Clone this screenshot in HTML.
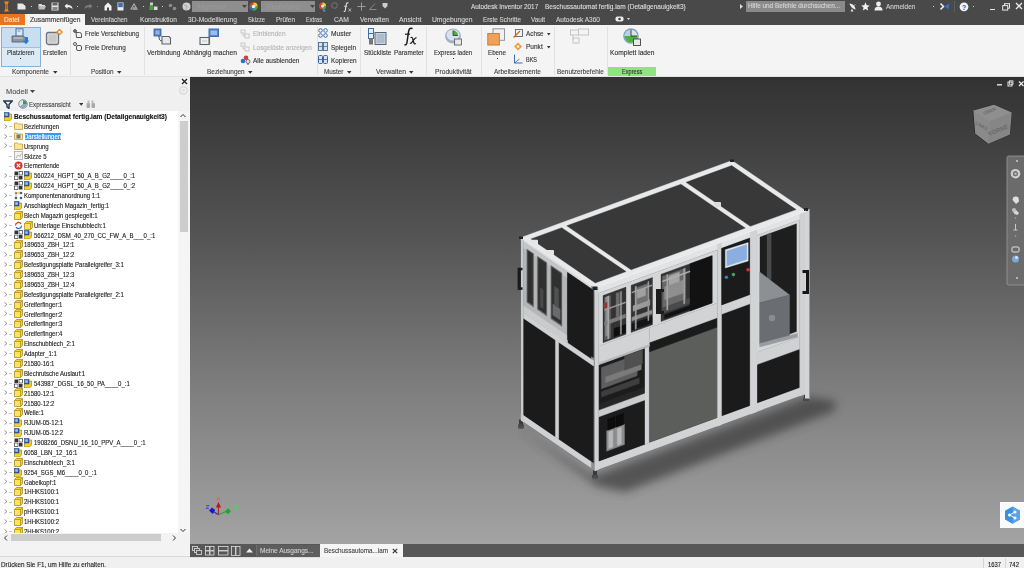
<!DOCTYPE html>
<html><head><meta charset="utf-8"><title>Autodesk Inventor</title>
<style>
*{margin:0;padding:0;box-sizing:border-box}
html,body{width:1024px;height:568px;overflow:hidden;background:#f0f0f0;font-family:"Liberation Sans",sans-serif}
.a{position:absolute;display:block}
.t{position:absolute;white-space:pre;line-height:1;transform-origin:0 0;-webkit-text-stroke:0.12px currentColor}
</style></head><body>
<div class="a" style="left:0px;top:0px;width:1024px;height:25px;background:#494949;"></div>
<svg class="a" style="left:3px;top:1px;" width="7" height="11" viewBox="0 0 7 11"><path d="M1 0.5h5l-1.2 2.2v5.6L6 10.5H1l1.2-2.2V2.7z" fill="#e8891e"/><path d="M2.6 3h1.8v5H2.6z" fill="#b45d10"/></svg>
<svg class="a" style="left:17px;top:3px;" width="10" height="7" viewBox="0 0 10 7"><path d="M0.5 0.5h5l3 2.5v3.5h-8z" fill="#e8e8e8"/></svg>
<div class="a" style="left:30.5px;top:6px;width:1.2px;height:1.2px;background:#cfcfcf;"></div>
<svg class="a" style="left:38px;top:3px;" width="8" height="7" viewBox="0 0 8 7"><path d="M0.5 1h3l1 1h2.5v1H2L0.5 6z" fill="#ddd"/><path d="M2 3h6L6.5 6.5H0.5z" fill="#bbb"/></svg>
<svg class="a" style="left:51px;top:2px;" width="8" height="9" viewBox="0 0 8 9"><rect x="0.5" y="0.5" width="7" height="8" fill="#e5e5e5"/><rect x="1.5" y="0.5" width="5" height="3" fill="#666"/><rect x="1.5" y="5" width="5" height="3" fill="#888"/></svg>
<svg class="a" style="left:64px;top:3px;" width="9" height="7" viewBox="0 0 9 7"><path d="M0.5 3L3.5 0.5v1.6c3 0 5 1.2 5 4.4-1-1.8-2.5-2.2-5-2.2V6z" fill="#eee"/></svg>
<div class="a" style="left:77px;top:6px;width:1.2px;height:1.2px;background:#cfcfcf;"></div>
<svg class="a" style="left:84px;top:3px;" width="9" height="7" viewBox="0 0 9 7"><path d="M8.5 3L5.5 0.5v1.6c-3 0-5 1.2-5 4.4 1-1.8 2.5-2.2 5-2.2V6z" fill="#7a7a7a"/></svg>
<div class="a" style="left:96.5px;top:6px;width:1.2px;height:1.2px;background:#9a9a9a;"></div>
<svg class="a" style="left:104px;top:2px;" width="8" height="9" viewBox="0 0 8 9"><path d="M4 0.5L0.5 4v4.5h2.5v-3h2v3h2.5V4z" fill="#f2f2f2"/></svg>
<svg class="a" style="left:117px;top:2px;" width="7" height="9" viewBox="0 0 7 9"><rect x="0.5" y="0.5" width="6" height="8" fill="#eee"/><rect x="1.2" y="1" width="4.6" height="4.2" fill="#3f6fb4"/></svg>
<svg class="a" style="left:130px;top:3px;" width="8" height="7" viewBox="0 0 8 7"><path d="M1 6L4 1l3 5z" fill="none" stroke="#aaa" stroke-width="1.2"/><rect x="3" y="4" width="4" height="3" fill="#999"/></svg>
<div class="a" style="left:142.5px;top:6px;width:1.2px;height:1.2px;background:#cfcfcf;"></div>
<svg class="a" style="left:149px;top:2px;" width="9" height="9" viewBox="0 0 9 9"><rect x="1" y="0.5" width="3" height="3" fill="#ccc"/><rect x="0.5" y="4" width="4" height="4" fill="#4aa13a"/><rect x="5" y="4.5" width="3.5" height="3.5" fill="#ddd"/></svg>
<div class="a" style="left:161.5px;top:6px;width:1.2px;height:1.2px;background:#cfcfcf;"></div>
<svg class="a" style="left:168px;top:3px;" width="9" height="8" viewBox="0 0 9 8"><circle cx="2.5" cy="2.5" r="1.8" fill="#8a8a8a"/><circle cx="6.5" cy="5.5" r="1.8" fill="#8a8a8a"/></svg>
<svg class="a" style="left:182px;top:2px;" width="9" height="9" viewBox="0 0 9 9"><circle cx="4.5" cy="4.5" r="4" fill="#cfcfcf"/><path d="M2 3c1 1 3 0 3 2s-2 1-1 3.5" stroke="#999" fill="none" stroke-width="0.8"/></svg>
<div class="a" style="left:192px;top:0.5px;width:55.5px;height:11.5px;background:#8e8e8e;"></div>
<div class="t" style="left:197px;top:3.08px;font-size:7px;color:#999;font-weight:400;transform:scaleX(0.9431);">Allgemein</div>
<svg class="a" style="left:242px;top:5px;" width="5" height="3" viewBox="0 0 5 3"><path d="M0 0h5L2.5 3z" fill="#444"/></svg>
<svg class="a" style="left:249px;top:2px;" width="9" height="9" viewBox="0 0 9 9"><circle cx="4.5" cy="4.5" r="4" fill="#e0402f"/><path d="M4.5 4.5L4.5 0.5A4 4 0 0 1 8.5 4.5z" fill="#f2c81e"/><path d="M4.5 4.5L8.5 4.5A4 4 0 0 1 4.5 8.5z" fill="#3fae49"/><path d="M4.5 4.5L4.5 8.5A4 4 0 0 1 0.5 4.5z" fill="#2f6fd0"/><circle cx="4.5" cy="4.5" r="1.8" fill="#eee"/></svg>
<div class="a" style="left:261px;top:0.5px;width:54px;height:11.5px;background:#8e8e8e;"></div>
<div class="t" style="left:266px;top:3.08px;font-size:7px;color:#999;font-weight:400;transform:scaleX(1.1963);">Standard</div>
<svg class="a" style="left:310px;top:5px;" width="5" height="3" viewBox="0 0 5 3"><path d="M0 0h5L2.5 3z" fill="#444"/></svg>
<svg class="a" style="left:318px;top:2px;" width="9" height="10" viewBox="0 0 9 10"><circle cx="4.5" cy="4" r="3.6" fill="#e0402f"/><path d="M4.5 4L4.5 0.4A3.6 3.6 0 0 1 8.1 4z" fill="#f2c81e"/><path d="M4.5 4L8.1 4A3.6 3.6 0 0 1 4.5 7.6z" fill="#3fae49"/><circle cx="4.5" cy="4" r="1.5" fill="#eee"/><path d="M5 6l3 3.5h-3z" fill="#23a9d8"/></svg>
<svg class="a" style="left:331px;top:2px;" width="7" height="8" viewBox="0 0 7 8"><circle cx="3.5" cy="3.5" r="2.8" fill="none" stroke="#777" stroke-width="1"/></svg>
<svg class="a" style="left:342px;top:2px;" width="11" height="10" viewBox="0 0 11 10"><path d="M6.5 1.2c-0.6-0.6-1.6-0.5-2 0.4-0.3 0.7-0.5 2-0.7 3.4L3.3 8.3c-0.2 1-0.8 1.4-1.6 1.2" stroke="#e0e0e0" stroke-width="1.1" fill="none"/><path d="M2.2 4.3h3" stroke="#e0e0e0" stroke-width="0.9"/><path d="M6.5 6.5l2.5 3M9 6.5l-2.5 3" stroke="#d0d0d0" stroke-width="0.8"/></svg>
<svg class="a" style="left:357px;top:2px;" width="9" height="9" viewBox="0 0 9 9"><path d="M4.5 0.5v8M0.5 4.5h8" stroke="#9a9a9a" stroke-width="1"/></svg>
<svg class="a" style="left:369px;top:3px;" width="8" height="7" viewBox="0 0 8 7"><path d="M0.5 6.5h7M0.5 6.5L6 0.5" stroke="#888" stroke-width="1" fill="none"/></svg>
<svg class="a" style="left:382px;top:2px;" width="6" height="7" viewBox="0 0 6 7"><path d="M0.5 1h5v3L3 6.5 0.5 4z" fill="#ccc"/></svg>
<div class="t" style="left:470.5px;top:2.98px;font-size:7px;color:#dcdcdc;font-weight:400;transform:scaleX(0.9087);">Autodesk Inventor 2017</div>
<div class="t" style="left:545px;top:2.98px;font-size:7px;color:#dcdcdc;font-weight:400;transform:scaleX(0.9344);">Beschussautomat fertig.iam (Detailgenauigkeit3)</div>
<svg class="a" style="left:740px;top:4px;" width="3" height="5" viewBox="0 0 3 5"><path d="M0 0l3 2.5L0 5z" fill="#ddd"/></svg>
<div class="a" style="left:746px;top:1px;width:99px;height:11px;background:#8a8a8a;"></div>
<div class="t" style="left:748px;top:3.36px;font-size:6.4px;color:#d6d6d6;font-weight:400;transform:scaleX(0.9959);">Hilfe und Befehle durchsuchen...</div>
<svg class="a" style="left:848px;top:1.5px;" width="9" height="10" viewBox="0 0 9 10"><path d="M1.5 1.5c3 0 6 3 6 6-2 0-6-4-6-6z" fill="#eee"/><path d="M4 5.5l3-3" stroke="#eee" stroke-width="0.9"/><path d="M2.5 9.5l1.5-3 1.5 3z" fill="#ddd"/></svg>
<svg class="a" style="left:861px;top:2px;" width="9" height="9" viewBox="0 0 9 9"><path d="M4.5 0.3l1.2 2.9 3.1 0.3-2.4 2 0.8 3.1-2.7-1.7-2.7 1.7 0.8-3.1-2.4-2 3.1-0.3z" fill="#f2f2f2"/></svg>
<svg class="a" style="left:874px;top:1px;" width="9" height="10" viewBox="0 0 9 10"><circle cx="4.5" cy="3" r="2.4" fill="#eee"/><path d="M0.5 9.5c0-3 1.5-4 4-4s4 1 4 4z" fill="#eee"/></svg>
<div class="t" style="left:885.6px;top:3.08px;font-size:7px;color:#cfcfcf;font-weight:400;transform:scaleX(0.9324);">Anmelden</div>
<div class="a" style="left:932.5px;top:5.5px;width:1.2px;height:1.2px;background:#cfcfcf;"></div>
<svg class="a" style="left:940px;top:2px;" width="10" height="9" viewBox="0 0 10 9"><path d="M0.5 1.5l3 3-3 3" stroke="#e8e8e8" stroke-width="1.6" fill="none"/><path d="M9 1.5L5 4.5 9 7.5z" fill="#3c73c8"/><rect x="4" y="3.8" width="2" height="1.4" fill="#3c73c8"/></svg>
<div class="a" style="left:953.5px;top:1px;width:1px;height:11px;background:#5e5e5e;"></div>
<svg class="a" style="left:959px;top:2px;" width="10" height="10" viewBox="0 0 10 10"><circle cx="5" cy="4.8" r="4.4" fill="#f5f5f5"/><text x="2.7" y="7.8" font-family="Liberation Sans" font-weight="bold" font-size="7.5" fill="#2a5fb0">?</text></svg>
<div class="a" style="left:973px;top:5.5px;width:1.2px;height:1.2px;background:#cfcfcf;"></div>
<div class="a" style="left:990px;top:9px;width:5px;height:1.3px;background:#e8e8e8;"></div>
<svg class="a" style="left:1002px;top:3px;" width="8" height="8" viewBox="0 0 8 8"><rect x="2.5" y="0.7" width="5" height="4.5" fill="none" stroke="#e8e8e8" stroke-width="1"/><rect x="0.7" y="2.6" width="5" height="4.5" fill="#494949" stroke="#e8e8e8" stroke-width="1"/></svg>
<svg class="a" style="left:1015px;top:2px;" width="8" height="8" viewBox="0 0 8 8"><path d="M1 1l6 6M7 1L1 7" stroke="#eee" stroke-width="1.3"/></svg>
<div class="a" style="left:0px;top:14px;width:24.5px;height:11px;background:#e9761f;"></div>
<div class="t" style="left:4px;top:16.08px;font-size:7px;color:#fde7d2;font-weight:400;transform:scaleX(0.9484);">Datei</div>
<div class="a" style="left:25px;top:14px;width:60px;height:11px;background:#f5f5f5;"></div>
<div class="t" style="left:29.5px;top:16.08px;font-size:7px;color:#333;font-weight:400;transform:scaleX(0.9613);">Zusammenfügen</div>
<div class="t" style="left:91.4px;top:15.88px;font-size:7px;color:#d2d2d2;font-weight:400;transform:scaleX(0.8954);">Vereinfachen</div>
<div class="t" style="left:139.6px;top:15.88px;font-size:7px;color:#d2d2d2;font-weight:400;transform:scaleX(0.9481);">Konstruktion</div>
<div class="t" style="left:188px;top:15.88px;font-size:7px;color:#d2d2d2;font-weight:400;transform:scaleX(0.9541);">3D-Modellierung</div>
<div class="t" style="left:248px;top:15.88px;font-size:7px;color:#d2d2d2;font-weight:400;transform:scaleX(0.8242);">Skizze</div>
<div class="t" style="left:276px;top:15.88px;font-size:7px;color:#d2d2d2;font-weight:400;transform:scaleX(0.9212);">Prüfen</div>
<div class="t" style="left:306px;top:15.88px;font-size:7px;color:#d2d2d2;font-weight:400;transform:scaleX(0.8063);">Extras</div>
<div class="t" style="left:334px;top:15.88px;font-size:7px;color:#d2d2d2;font-weight:400;transform:scaleX(0.9639);">CAM</div>
<div class="t" style="left:359.5px;top:15.88px;font-size:7px;color:#d2d2d2;font-weight:400;transform:scaleX(0.9431);">Verwalten</div>
<div class="t" style="left:398.5px;top:15.88px;font-size:7px;color:#d2d2d2;font-weight:400;transform:scaleX(0.9796);">Ansicht</div>
<div class="t" style="left:431.5px;top:15.88px;font-size:7px;color:#d2d2d2;font-weight:400;transform:scaleX(0.9636);">Umgebungen</div>
<div class="t" style="left:482.5px;top:15.88px;font-size:7px;color:#d2d2d2;font-weight:400;transform:scaleX(0.9044);">Erste Schritte</div>
<div class="t" style="left:531px;top:15.88px;font-size:7px;color:#d2d2d2;font-weight:400;transform:scaleX(0.9069);">Vault</div>
<div class="t" style="left:556px;top:15.88px;font-size:7px;color:#d2d2d2;font-weight:400;transform:scaleX(0.9343);">Autodesk A360</div>
<svg class="a" style="left:615px;top:16px;" width="16" height="7" viewBox="0 0 16 7"><path d="M0.5 2.2Q0.5 0.5 2.5 0.5h4Q8.5 0.5 8.5 2.2v1.6Q8.5 5.5 6.5 5.5h-4Q0.5 5.5 0.5 3.8z" fill="#eee"/><circle cx="4.5" cy="3" r="1.3" fill="#444"/><path d="M12 2h3l-1.5 2z" fill="#ddd"/></svg>
<div class="a" style="left:0px;top:25px;width:1024px;height:51px;background:#f4f4f4;"></div>
<div class="a" style="left:0px;top:75.5px;width:1024px;height:1.5px;background:#e2e2e2;"></div>
<div class="a" style="left:70px;top:27px;width:1px;height:48px;background:#e1e1e1;"></div>
<div class="a" style="left:143.5px;top:27px;width:1px;height:48px;background:#e1e1e1;"></div>
<div class="a" style="left:316.5px;top:27px;width:1px;height:48px;background:#e1e1e1;"></div>
<div class="a" style="left:360px;top:27px;width:1px;height:48px;background:#e1e1e1;"></div>
<div class="a" style="left:426px;top:27px;width:1px;height:48px;background:#e1e1e1;"></div>
<div class="a" style="left:480.5px;top:27px;width:1px;height:48px;background:#e1e1e1;"></div>
<div class="a" style="left:553.8px;top:27px;width:1px;height:48px;background:#e1e1e1;"></div>
<div class="a" style="left:606.7px;top:27px;width:1px;height:48px;background:#e1e1e1;"></div>
<div class="a" style="left:0.5px;top:26.5px;width:40.5px;height:40px;background:#dceaf6;border:1px solid #86b2d8"></div>
<div class="a" style="left:1.5px;top:27.5px;width:38.5px;height:20px;background:#c9def1;"></div>
<div class="a" style="left:1.5px;top:47px;width:38.5px;height:1px;background:#9fc2e2;"></div>
<svg class="a" style="left:11px;top:28px;" width="20" height="17" viewBox="0 0 20 17"><rect x="5" y="0.8" width="7" height="7.5" fill="#dce8f6" stroke="#3e6fb0" stroke-width="1"/><path d="M6.5 3h3" stroke="#3e6fb0" stroke-width="0.7"/><path d="M1 8h11.5l1.5 1.5h2.5V14H1z" fill="#8e979f" stroke="#4e5863" stroke-width="0.8"/><path d="M2.5 10h9" stroke="#c5cad0" stroke-width="1.2"/><path d="M13.8 9.5v3h-2L15 16.3l3.2-3.8h-2v-3z" fill="#1e7fd8"/></svg>
<div class="t" style="left:7px;top:48.78px;font-size:7px;color:#333;font-weight:400;transform:scaleX(0.8831);">Platzieren</div>
<div class="a" style="left:20px;top:57.5px;width:1.3px;height:1.3px;background:#333;"></div>
<svg class="a" style="left:45px;top:28px;" width="19" height="18" viewBox="0 0 19 18"><rect x="1.5" y="4.5" width="12" height="12" rx="2" fill="#dcdcdc" stroke="#6a7480" stroke-width="1.3"/><rect x="3.5" y="6.5" width="8" height="8" fill="#c9c9c9"/><path d="M14.5 0.5l3.5 3.5-3.5 3.5-3.5-3.5z" fill="#f08a1e"/><circle cx="14.5" cy="4" r="1.2" fill="#fff"/></svg>
<div class="t" style="left:42.5px;top:48.78px;font-size:7px;color:#333;font-weight:400;transform:scaleX(0.8812);">Erstellen</div>
<div class="t" style="left:12px;top:68.18px;font-size:7px;color:#444;font-weight:400;transform:scaleX(0.9319);">Komponente</div>
<svg class="a" style="left:52.5px;top:70.5px;" width="5" height="3" viewBox="0 0 5 3"><path d="M0 0h4.5L2.25 2.8z" fill="#333"/></svg>
<svg class="a" style="left:73px;top:29px;" width="10" height="9" viewBox="0 0 10 9"><circle cx="2" cy="2" r="1.4" fill="none" stroke="#444" stroke-width="0.9"/><path d="M3 3.5h3.5a2 2 0 0 1 2 2V8.5h-5z" fill="none" stroke="#555" stroke-width="1"/><path d="M0.5 2h3M2 0.5v3" stroke="#444" stroke-width="0.7"/></svg>
<div class="t" style="left:85px;top:30.38px;font-size:7px;color:#333;font-weight:400;transform:scaleX(0.8951);">Freie Verschiebung</div>
<svg class="a" style="left:73px;top:42px;" width="10" height="9" viewBox="0 0 10 9"><circle cx="2" cy="2" r="1.5" fill="none" stroke="#444" stroke-width="0.9"/><rect x="3.5" y="3.5" width="5" height="5" rx="1.5" fill="none" stroke="#555" stroke-width="1"/></svg>
<div class="t" style="left:85px;top:43.58px;font-size:7px;color:#333;font-weight:400;transform:scaleX(0.9117);">Freie Drehung</div>
<div class="t" style="left:91px;top:68.18px;font-size:7px;color:#444;font-weight:400;transform:scaleX(0.9034);">Position</div>
<svg class="a" style="left:117px;top:70.5px;" width="5" height="3" viewBox="0 0 5 3"><path d="M0 0h4.5L2.25 2.8z" fill="#333"/></svg>
<svg class="a" style="left:153px;top:28px;" width="19" height="17" viewBox="0 0 19 17"><rect x="1" y="1" width="7" height="7" fill="#4f86cc" stroke="#2f5d9a" stroke-width="0.8"/><rect x="2.5" y="2.5" width="4" height="4" fill="#8fb4e4"/><path d="M6 8c0 4 1 5 4 5" stroke="#333" stroke-width="1" fill="none"/><path d="M9 8.5h7l1.5 1.5v6H9z" fill="#e8e8e8" stroke="#5b6570" stroke-width="1.1"/></svg>
<div class="t" style="left:146.7px;top:48.78px;font-size:7px;color:#333;font-weight:400;transform:scaleX(0.9401);">Verbindung</div>
<svg class="a" style="left:199px;top:28px;" width="21" height="18" viewBox="0 0 21 18"><rect x="10" y="1" width="9.5" height="7.5" fill="#4f86cc" stroke="#3d6fb5" stroke-width="1"/><rect x="11.5" y="2.5" width="6.5" height="4.5" fill="#9dbde8"/><path d="M10.5 8.5v8" stroke="#e0453a" stroke-width="1.2"/><rect x="1" y="9.5" width="9" height="7" fill="#f0f0f0" stroke="#5b6570" stroke-width="1.1"/><path d="M3 13h5" stroke="#bbb" stroke-width="0.8"/></svg>
<div class="t" style="left:183px;top:48.78px;font-size:7px;color:#333;font-weight:400;transform:scaleX(0.9568);">Abhängig machen</div>
<svg class="a" style="left:240px;top:29px;" width="11" height="10" viewBox="0 0 11 10"><rect x="1" y="1" width="4" height="3" fill="none" stroke="#c8c8c8"/><rect x="5" y="5" width="4" height="4" fill="none" stroke="#c8c8c8"/><path d="M3 4v3h2" stroke="#c8c8c8" fill="none"/></svg>
<div class="t" style="left:252.5px;top:30.48px;font-size:7px;color:#b4b4b4;font-weight:400;transform:scaleX(0.9277);">Einblenden</div>
<svg class="a" style="left:240px;top:42px;" width="11" height="10" viewBox="0 0 11 10"><rect x="1" y="1" width="4" height="3" fill="none" stroke="#c8c8c8"/><rect x="5" y="5" width="4" height="4" fill="none" stroke="#c8c8c8"/><path d="M3 4v3h2" stroke="#c8c8c8" fill="none"/></svg>
<div class="t" style="left:252.5px;top:43.58px;font-size:7px;color:#b4b4b4;font-weight:400;transform:scaleX(0.9172);">Losgelöste anzeigen</div>
<svg class="a" style="left:240px;top:55px;" width="11" height="10" viewBox="0 0 11 10"><circle cx="3" cy="6" r="2.3" fill="#2f6fd0"/><circle cx="6" cy="2.8" r="2.3" fill="#d0403a"/><circle cx="8" cy="6.5" r="2" fill="#e9e9e9" stroke="#555" stroke-width="0.8"/><path d="M8 8.5v1.5" stroke="#555"/></svg>
<div class="t" style="left:252.5px;top:56.78px;font-size:7px;color:#333;font-weight:400;transform:scaleX(0.9332);">Alle ausblenden</div>
<div class="t" style="left:206.8px;top:68.18px;font-size:7px;color:#444;font-weight:400;transform:scaleX(0.9223);">Beziehungen</div>
<svg class="a" style="left:247.5px;top:70.5px;" width="5" height="3" viewBox="0 0 5 3"><path d="M0 0h4.5L2.25 2.8z" fill="#333"/></svg>
<svg class="a" style="left:318px;top:28px;" width="10" height="10" viewBox="0 0 10 10"><circle cx="2.5" cy="2.5" r="1.8" fill="none" stroke="#3a6fb8" stroke-width="1"/><circle cx="7.5" cy="2.5" r="1.8" fill="none" stroke="#3a6fb8" stroke-width="1"/><circle cx="2.5" cy="7.5" r="1.8" fill="none" stroke="#3a6fb8" stroke-width="1"/><circle cx="7.5" cy="7.5" r="1.8" fill="none" stroke="#3a6fb8" stroke-width="1"/></svg>
<div class="t" style="left:331px;top:30.38px;font-size:7px;color:#333;font-weight:400;transform:scaleX(0.9483);">Muster</div>
<svg class="a" style="left:318px;top:42px;" width="10" height="9" viewBox="0 0 10 9"><rect x="0.5" y="0.5" width="4" height="8" fill="#d5e2f2" stroke="#4d6f9a" stroke-width="0.9"/><rect x="5.5" y="0.5" width="4" height="8" fill="#d5e2f2" stroke="#4d6f9a" stroke-width="0.9"/><path d="M0.5 4.5h9" stroke="#4d6f9a" stroke-width="0.8"/></svg>
<div class="t" style="left:331px;top:43.58px;font-size:7px;color:#333;font-weight:400;transform:scaleX(0.9174);">Spiegeln</div>
<svg class="a" style="left:318px;top:55px;" width="10" height="9" viewBox="0 0 10 9"><rect x="0.5" y="0.5" width="4" height="8" rx="1" fill="#d5e2f2" stroke="#3d639a" stroke-width="1"/><rect x="5.5" y="0.5" width="4" height="8" rx="1" fill="#d5e2f2" stroke="#3d639a" stroke-width="1"/><path d="M0.5 4.5h9" stroke="#3d639a" stroke-width="0.8"/></svg>
<div class="t" style="left:331px;top:56.78px;font-size:7px;color:#333;font-weight:400;transform:scaleX(0.9133);">Kopieren</div>
<div class="t" style="left:324px;top:68.18px;font-size:7px;color:#444;font-weight:400;transform:scaleX(0.9109);">Muster</div>
<svg class="a" style="left:347px;top:70.5px;" width="5" height="3" viewBox="0 0 5 3"><path d="M0 0h4.5L2.25 2.8z" fill="#333"/></svg>
<svg class="a" style="left:368px;top:28px;" width="19" height="17" viewBox="0 0 19 17"><rect x="0.5" y="0.5" width="5" height="5" fill="#e6eef8" stroke="#3e6fb0"/><rect x="0.5" y="5.5" width="5" height="5" fill="#e6eef8" stroke="#3e6fb0"/><rect x="1" y="10" width="4" height="6.5" fill="#777"/><rect x="7" y="4.5" width="11" height="12" fill="#c9d6e4" stroke="#5a6673" stroke-width="1"/><rect x="8.5" y="6" width="8" height="9" fill="#aebdcd"/></svg>
<div class="t" style="left:363.6px;top:48.78px;font-size:7px;color:#333;font-weight:400;transform:scaleX(0.9143);">Stückliste</div>
<svg class="a" style="left:400px;top:27px;" width="18" height="19" viewBox="0 0 18 19"><path d="M12.5 1.8c-0.8-0.9-2.6-0.8-3.3 0.6-0.5 1-0.8 3-1.1 5.2L7 15.5c-0.3 1.8-1.2 2.6-2.6 2.3" stroke="#1a1a1a" stroke-width="1.5" fill="none"/><path d="M5 7.2h5" stroke="#1a1a1a" stroke-width="1.2"/><path d="M10.5 10.5c1.5-0.5 2 0.3 2.4 2l1 3.5c0.3 1 1 1.3 2 0.6M16.5 10.6c-1 0-1.8 0.8-3 2.5l-1.6 2.3c-0.6 0.9-1.3 1.1-2 0.6" stroke="#1a1a1a" stroke-width="1.2" fill="none"/></svg>
<div class="t" style="left:394.4px;top:48.78px;font-size:7px;color:#333;font-weight:400;transform:scaleX(0.9055);">Parameter</div>
<div class="t" style="left:376px;top:68.18px;font-size:7px;color:#444;font-weight:400;transform:scaleX(0.9756);">Verwalten</div>
<svg class="a" style="left:409px;top:70.5px;" width="5" height="3" viewBox="0 0 5 3"><path d="M0 0h4.5L2.25 2.8z" fill="#333"/></svg>
<svg class="a" style="left:444px;top:28px;" width="19" height="18" viewBox="0 0 19 18"><ellipse cx="9" cy="8" rx="8" ry="7.5" fill="#9fb3c6"/><ellipse cx="9" cy="7" rx="6.5" ry="5.5" fill="#d7e2ec"/><path d="M9 2.5v5h5a5 5 0 0 0-5-5z" fill="#4caf3c"/><path d="M9 7.5h5" stroke="#222" stroke-width="0.7"/><path d="M9 2.5v5" stroke="#222" stroke-width="0.7"/><rect x="10.5" y="11" width="7" height="6" fill="#e8e8e8" stroke="#555" stroke-width="0.8"/></svg>
<div class="t" style="left:434.4px;top:48.78px;font-size:7px;color:#333;font-weight:400;transform:scaleX(0.8611);">Express laden</div>
<div class="a" style="left:452.5px;top:57.5px;width:1.3px;height:1.3px;background:#333;"></div>
<div class="t" style="left:435px;top:68.18px;font-size:7px;color:#444;font-weight:400;transform:scaleX(0.9525);">Produktivität</div>
<svg class="a" style="left:487px;top:28px;" width="19" height="18" viewBox="0 0 19 18"><rect x="6" y="0.8" width="11.5" height="11.5" fill="#f0f0f0" stroke="#8a96a3" stroke-width="1"/><rect x="0.8" y="5.5" width="11.5" height="11.5" fill="#f0a25a" stroke="#d4782a" stroke-width="1"/></svg>
<div class="t" style="left:487.6px;top:48.98px;font-size:7px;color:#333;font-weight:400;transform:scaleX(0.8889);">Ebene</div>
<div class="a" style="left:496.5px;top:57.8px;width:1.3px;height:1.3px;background:#333;"></div>
<svg class="a" style="left:513px;top:29px;" width="10" height="9" viewBox="0 0 10 9"><rect x="2.5" y="0.5" width="7" height="7" fill="none" stroke="#5b6570" stroke-width="0.9"/><path d="M0.5 8.5L7 2" stroke="#d2601a" stroke-width="1.2"/></svg>
<div class="t" style="left:526px;top:30.18px;font-size:7px;color:#333;font-weight:400;transform:scaleX(0.9040);">Achse</div>
<svg class="a" style="left:547px;top:32.5px;" width="4" height="3" viewBox="0 0 4 3"><path d="M0 0h3.5L1.75 2.5z" fill="#333"/></svg>
<svg class="a" style="left:513px;top:42px;" width="10" height="9" viewBox="0 0 10 9"><path d="M5 0.5l4 4-4 4-4-4z" fill="#f19a3a"/><circle cx="5" cy="4.5" r="1.3" fill="#fff"/></svg>
<div class="t" style="left:526px;top:43.48px;font-size:7px;color:#333;font-weight:400;transform:scaleX(0.9326);">Punkt</div>
<svg class="a" style="left:547px;top:45.8px;" width="4" height="3" viewBox="0 0 4 3"><path d="M0 0h3.5L1.75 2.5z" fill="#333"/></svg>
<svg class="a" style="left:513px;top:54px;" width="10" height="10" viewBox="0 0 10 10"><path d="M1.5 0.5v8.5h8" stroke="#3a6fb8" stroke-width="1" fill="none"/><path d="M1.5 9l5-4" stroke="#555" stroke-width="0.8"/></svg>
<div class="t" style="left:526px;top:56.38px;font-size:7px;color:#333;font-weight:400;transform:scaleX(0.7848);">BKS</div>
<div class="t" style="left:493.5px;top:68.18px;font-size:7px;color:#444;font-weight:400;transform:scaleX(0.9250);">Arbeitselemente</div>
<svg class="a" style="left:570px;top:28px;" width="20" height="17" viewBox="0 0 20 17"><rect x="0.5" y="2" width="8" height="5" fill="none" stroke="#c5c5c5" stroke-width="1"/><rect x="8.5" y="1" width="10" height="6" fill="none" stroke="#c5c5c5" stroke-width="1"/><rect x="3" y="10" width="6" height="5" fill="none" stroke="#c5c5c5" stroke-width="1"/><path d="M3 7v5" stroke="#c5c5c5"/></svg>
<div class="t" style="left:556.6px;top:68.18px;font-size:7px;color:#444;font-weight:400;transform:scaleX(0.9179);">Benutzerbefehle</div>
<svg class="a" style="left:622px;top:28px;" width="19" height="18" viewBox="0 0 19 18"><circle cx="9" cy="8" r="7.8" fill="#7aa2c0"/><circle cx="9" cy="8" r="6.3" fill="#d7e4ee"/><path d="M9 8V1.7A6.3 6.3 0 0 0 2.7 8z" fill="#bcd0e0"/><path d="M2.7 8A6.3 6.3 0 0 0 15.3 8z" fill="#4db23c"/><path d="M9 1.7V8h6" stroke="#222" stroke-width="0.8" fill="none"/><rect x="11.5" y="11" width="7" height="6.5" fill="#eaeaea" stroke="#444" stroke-width="0.9"/></svg>
<div class="t" style="left:609.5px;top:48.78px;font-size:7px;color:#333;font-weight:400;transform:scaleX(0.9528);">Komplett laden</div>
<div class="a" style="left:607.6px;top:67px;width:48.3px;height:9px;background:#8ce67c;"></div>
<div class="t" style="left:621.6px;top:68.38px;font-size:7px;color:#333;font-weight:400;transform:scaleX(0.8064);">Express</div>
<div class="a" style="left:0px;top:76.5px;width:190px;height:480px;background:#f0f0f0;"></div>
<div class="a" style="left:0px;top:111px;width:178px;height:422px;background:#ffffff;"></div>
<svg class="a" style="left:181px;top:77.5px;" width="7" height="7" viewBox="0 0 7 7"><path d="M1 1l5 5M6 1L1 6" stroke="#222" stroke-width="1.3"/></svg>
<div class="t" style="left:5.6px;top:87.75px;font-size:7.5px;color:#555;font-weight:400;transform:scaleX(0.9912);">Modell</div>
<svg class="a" style="left:29.5px;top:89.5px;" width="5" height="3.5" viewBox="0 0 5 3.5"><path d="M0 0h5L2.5 3z" fill="#444"/></svg>
<svg class="a" style="left:179px;top:86px;" width="9" height="9" viewBox="0 0 9 9"><circle cx="4.5" cy="4.5" r="3.8" fill="none" stroke="#cfcfcf" stroke-width="1"/><text x="2.7" y="7" font-family="Liberation Sans" font-size="5.5" fill="#cfcfcf">?</text></svg>
<svg class="a" style="left:3px;top:99.5px;" width="10" height="9" viewBox="0 0 10 9"><path d="M0.8 1h8.4L6 4.5v4L4 7V4.5z" fill="none" stroke="#1f3550" stroke-width="1.4"/></svg>
<svg class="a" style="left:17.5px;top:98.5px;" width="10" height="10" viewBox="0 0 10 10"><circle cx="5" cy="5" r="4.3" fill="#dfe6ec" stroke="#6a7a8a" stroke-width="0.8"/><path d="M5 5V1.2A3.8 3.8 0 0 1 8.8 5z" fill="#3e9c3a"/><path d="M5 5h3.8A3.8 3.8 0 0 1 2 7.5z" fill="#8fa9bf"/></svg>
<div class="t" style="left:28.8px;top:100.58px;font-size:7px;color:#444;font-weight:400;transform:scaleX(0.8785);">Expressansicht</div>
<svg class="a" style="left:78.5px;top:102.5px;" width="4.5" height="3" viewBox="0 0 4.5 3"><path d="M0 0h4.5L2.25 2.8z" fill="#333"/></svg>
<svg class="a" style="left:86px;top:99.5px;" width="10" height="9" viewBox="0 0 10 9"><rect x="0.5" y="3" width="3.5" height="5" rx="1" fill="#a9a9a9"/><rect x="5.5" y="3" width="3.5" height="5" rx="1" fill="#a9a9a9"/><rect x="1.5" y="0.5" width="2" height="3" fill="#bbb"/><rect x="5.5" y="0.5" width="2" height="3" fill="#bbb"/></svg>
<svg class="a" style="left:3.5px;top:112px;" width="9" height="9" viewBox="0 0 9 9"><path d="M0.5 4l2-2h5v5l-2 2h-5z" fill="#f3cf2f" stroke="#a3811a" stroke-width="0.7"/><rect x="0.5" y="0.5" width="4.5" height="4.5" fill="#2d5fa8" stroke="#1c3f73" stroke-width="0.5"/><rect x="1.3" y="1.3" width="2.5" height="2.5" fill="#a8c4ea"/></svg>
<div class="t" style="left:14px;top:113.56px;font-size:6.6px;color:#111;font-weight:700;transform:scaleX(1.0013);">Beschussautomat fertig.iam (Detailgenauigkeit3)</div>
<svg class="a" style="left:4px;top:123.7px;" width="4" height="5" viewBox="0 0 4 5"><path d="M0.6 0.5L3 2.5 0.6 4.5" stroke="#777" stroke-width="0.8" fill="none"/></svg>
<div class="a" style="left:8.5px;top:126.2px;width:3px;height:0.8px;background:#c8c8c8;"></div>
<svg class="a" style="left:14px;top:122.2px;" width="9" height="8" viewBox="0 0 9 8"><path d="M0.5 1h3l1 1h4v5.5h-8z" fill="#f7e3a2" stroke="#c99d3a" stroke-width="0.8"/></svg>
<div class="t" style="left:24px;top:123.86px;font-size:6.4px;color:#222;font-weight:400;transform:scaleX(0.94);">Beziehungen</div>
<svg class="a" style="left:4px;top:133.58px;" width="4" height="5" viewBox="0 0 4 5"><path d="M0.6 0.5L3 2.5 0.6 4.5" stroke="#777" stroke-width="0.8" fill="none"/></svg>
<div class="a" style="left:8.5px;top:136.08px;width:3px;height:0.8px;background:#c8c8c8;"></div>
<svg class="a" style="left:14px;top:132.08px;" width="9" height="8" viewBox="0 0 9 8"><path d="M0.5 1h3l1 1h4v5.5h-8z" fill="#f7e3a2" stroke="#c99d3a" stroke-width="0.8"/></svg>
<svg class="a" style="left:15.5px;top:134.08px;" width="5" height="5" viewBox="0 0 5 5"><rect x="0.5" y="0.5" width="4" height="4" fill="#777"/></svg>
<div class="a" style="left:24.5px;top:133.28px;width:36.5px;height:6.8px;background:#3399ff;"></div>
<div class="t" style="left:24px;top:133.74px;font-size:6.4px;color:#fff;font-weight:400;transform:scaleX(0.94);">Darstellungen</div>
<svg class="a" style="left:4px;top:143.46px;" width="4" height="5" viewBox="0 0 4 5"><path d="M0.6 0.5L3 2.5 0.6 4.5" stroke="#777" stroke-width="0.8" fill="none"/></svg>
<div class="a" style="left:8.5px;top:145.96px;width:3px;height:0.8px;background:#c8c8c8;"></div>
<svg class="a" style="left:14px;top:141.96px;" width="9" height="8" viewBox="0 0 9 8"><path d="M0.5 1h3l1 1h4v5.5h-8z" fill="#f7e3a2" stroke="#c99d3a" stroke-width="0.8"/></svg>
<div class="t" style="left:24px;top:143.62px;font-size:6.4px;color:#222;font-weight:400;transform:scaleX(0.94);">Ursprung</div>
<div class="a" style="left:8.5px;top:155.84px;width:3px;height:0.8px;background:#c8c8c8;"></div>
<svg class="a" style="left:14px;top:151.34px;" width="9" height="9" viewBox="0 0 9 9"><rect x="0.5" y="0.5" width="8" height="8" fill="#f5f5f5" stroke="#9a9a9a" stroke-width="0.7"/><path d="M2 7l2-3 2 1.5 1.5-3" stroke="#888" stroke-width="0.6" fill="none"/></svg>
<div class="t" style="left:24px;top:153.50px;font-size:6.4px;color:#222;font-weight:400;transform:scaleX(0.94);">Skizze 5</div>
<div class="a" style="left:8.5px;top:165.72px;width:3px;height:0.8px;background:#c8c8c8;"></div>
<svg class="a" style="left:14px;top:161.22px;" width="9" height="9" viewBox="0 0 9 9"><circle cx="4.5" cy="4.5" r="4" fill="#d8302a"/><path d="M2.7 2.7l3.6 3.6M6.3 2.7L2.7 6.3" stroke="#fff" stroke-width="1.1"/></svg>
<div class="t" style="left:24px;top:163.38px;font-size:6.4px;color:#222;font-weight:400;transform:scaleX(0.94);">Elementende</div>
<svg class="a" style="left:4px;top:173.10000000000002px;" width="4" height="5" viewBox="0 0 4 5"><path d="M0.6 0.5L3 2.5 0.6 4.5" stroke="#777" stroke-width="0.8" fill="none"/></svg>
<div class="a" style="left:8.5px;top:175.60000000000002px;width:3px;height:0.8px;background:#c8c8c8;"></div>
<svg class="a" style="left:14px;top:171.10000000000002px;" width="9" height="9" viewBox="0 0 9 9"><rect x="0.5" y="0.5" width="3.5" height="3.5" fill="#333"/><rect x="5" y="0.5" width="3.5" height="3.5" fill="#fff" stroke="#333" stroke-width="0.7"/><rect x="0.5" y="5" width="3.5" height="3.5" fill="#fff" stroke="#333" stroke-width="0.7"/><rect x="5" y="5" width="3.5" height="3.5" fill="#333"/></svg>
<svg class="a" style="left:23.5px;top:171.10000000000002px;" width="9" height="9" viewBox="0 0 9 9"><path d="M0.5 4l2-2h5v5l-2 2h-5z" fill="#f3cf2f" stroke="#a3811a" stroke-width="0.7"/><rect x="0.5" y="0.5" width="4.5" height="4.5" fill="#2d5fa8" stroke="#1c3f73" stroke-width="0.5"/><rect x="1.3" y="1.3" width="2.5" height="2.5" fill="#a8c4ea"/></svg>
<div class="t" style="left:33.5px;top:173.26px;font-size:6.4px;color:#222;font-weight:400;transform:scaleX(0.94);">560224_HGPT_50_A_B_G2____0_:1</div>
<svg class="a" style="left:4px;top:182.98000000000002px;" width="4" height="5" viewBox="0 0 4 5"><path d="M0.6 0.5L3 2.5 0.6 4.5" stroke="#777" stroke-width="0.8" fill="none"/></svg>
<div class="a" style="left:8.5px;top:185.48000000000002px;width:3px;height:0.8px;background:#c8c8c8;"></div>
<svg class="a" style="left:14px;top:180.98000000000002px;" width="9" height="9" viewBox="0 0 9 9"><rect x="0.5" y="0.5" width="3.5" height="3.5" fill="#333"/><rect x="5" y="0.5" width="3.5" height="3.5" fill="#fff" stroke="#333" stroke-width="0.7"/><rect x="0.5" y="5" width="3.5" height="3.5" fill="#fff" stroke="#333" stroke-width="0.7"/><rect x="5" y="5" width="3.5" height="3.5" fill="#333"/></svg>
<svg class="a" style="left:23.5px;top:180.98000000000002px;" width="9" height="9" viewBox="0 0 9 9"><path d="M0.5 4l2-2h5v5l-2 2h-5z" fill="#f3cf2f" stroke="#a3811a" stroke-width="0.7"/><rect x="0.5" y="0.5" width="4.5" height="4.5" fill="#2d5fa8" stroke="#1c3f73" stroke-width="0.5"/><rect x="1.3" y="1.3" width="2.5" height="2.5" fill="#a8c4ea"/></svg>
<div class="t" style="left:33.5px;top:183.14px;font-size:6.4px;color:#222;font-weight:400;transform:scaleX(0.94);">560224_HGPT_50_A_B_G2____0_:2</div>
<svg class="a" style="left:4px;top:192.86px;" width="4" height="5" viewBox="0 0 4 5"><path d="M0.6 0.5L3 2.5 0.6 4.5" stroke="#777" stroke-width="0.8" fill="none"/></svg>
<div class="a" style="left:8.5px;top:195.36px;width:3px;height:0.8px;background:#c8c8c8;"></div>
<svg class="a" style="left:14px;top:190.86px;" width="9" height="9" viewBox="0 0 9 9"><circle cx="2" cy="2" r="1.3" fill="#c49a22"/><circle cx="7" cy="2" r="1.3" fill="#555"/><circle cx="2" cy="7" r="1.3" fill="#555"/><circle cx="7" cy="7" r="1.3" fill="#2d5fa8"/><path d="M2 2h5M2 2v5" stroke="#777" stroke-width="0.5"/></svg>
<div class="t" style="left:24px;top:193.02px;font-size:6.4px;color:#222;font-weight:400;transform:scaleX(0.94);">Komponentenanordnung 1:1</div>
<svg class="a" style="left:4px;top:202.74px;" width="4" height="5" viewBox="0 0 4 5"><path d="M0.6 0.5L3 2.5 0.6 4.5" stroke="#777" stroke-width="0.8" fill="none"/></svg>
<div class="a" style="left:8.5px;top:205.24px;width:3px;height:0.8px;background:#c8c8c8;"></div>
<svg class="a" style="left:14px;top:200.74px;" width="9" height="9" viewBox="0 0 9 9"><path d="M0.5 4l2-2h5v5l-2 2h-5z" fill="#f3cf2f" stroke="#a3811a" stroke-width="0.7"/><rect x="0.5" y="0.5" width="4.5" height="4.5" fill="#2d5fa8" stroke="#1c3f73" stroke-width="0.5"/><rect x="1.3" y="1.3" width="2.5" height="2.5" fill="#a8c4ea"/></svg>
<div class="t" style="left:24px;top:202.90px;font-size:6.4px;color:#222;font-weight:400;transform:scaleX(0.94);">Anschlagblech Magazin_fertig:1</div>
<svg class="a" style="left:4px;top:212.62px;" width="4" height="5" viewBox="0 0 4 5"><path d="M0.6 0.5L3 2.5 0.6 4.5" stroke="#777" stroke-width="0.8" fill="none"/></svg>
<div class="a" style="left:8.5px;top:215.12px;width:3px;height:0.8px;background:#c8c8c8;"></div>
<svg class="a" style="left:14px;top:210.62px;" width="9" height="9" viewBox="0 0 9 9"><path d="M0.5 2.5l2-2h6v6l-2 2h-6z" fill="#f3cf2f" stroke="#a3811a" stroke-width="0.7"/><path d="M0.5 2.5h6v6M6.5 2.5l2-2" stroke="#a3811a" stroke-width="0.6" fill="none"/><rect x="1" y="3" width="5" height="5" fill="#fbe36a"/></svg>
<div class="t" style="left:24px;top:212.78px;font-size:6.4px;color:#222;font-weight:400;transform:scaleX(0.94);">Blech Magazin gespiegelt:1</div>
<svg class="a" style="left:4px;top:222.5px;" width="4" height="5" viewBox="0 0 4 5"><path d="M0.6 0.5L3 2.5 0.6 4.5" stroke="#777" stroke-width="0.8" fill="none"/></svg>
<div class="a" style="left:8.5px;top:225.0px;width:3px;height:0.8px;background:#c8c8c8;"></div>
<svg class="a" style="left:14px;top:220.5px;" width="9" height="9" viewBox="0 0 9 9"><path d="M1.5 4.5a3 3 0 0 1 5.5-1.7" stroke="#d8302a" stroke-width="1.2" fill="none"/><path d="M7.5 4.5a3 3 0 0 1-5.5 1.7" stroke="#2d6fd0" stroke-width="1.2" fill="none"/></svg>
<svg class="a" style="left:23.5px;top:220.5px;" width="9" height="9" viewBox="0 0 9 9"><path d="M0.5 2.5l2-2h6v6l-2 2h-6z" fill="#f3cf2f" stroke="#a3811a" stroke-width="0.7"/><path d="M0.5 2.5h6v6M6.5 2.5l2-2" stroke="#a3811a" stroke-width="0.6" fill="none"/><rect x="1" y="3" width="5" height="5" fill="#fbe36a"/></svg>
<div class="t" style="left:33.5px;top:222.66px;font-size:6.4px;color:#222;font-weight:400;transform:scaleX(0.94);">Unterlage Einschubblech:1</div>
<svg class="a" style="left:4px;top:232.38px;" width="4" height="5" viewBox="0 0 4 5"><path d="M0.6 0.5L3 2.5 0.6 4.5" stroke="#777" stroke-width="0.8" fill="none"/></svg>
<div class="a" style="left:8.5px;top:234.88px;width:3px;height:0.8px;background:#c8c8c8;"></div>
<svg class="a" style="left:14px;top:230.38px;" width="9" height="9" viewBox="0 0 9 9"><rect x="0.5" y="0.5" width="3.5" height="3.5" fill="#333"/><rect x="5" y="0.5" width="3.5" height="3.5" fill="#fff" stroke="#333" stroke-width="0.7"/><rect x="0.5" y="5" width="3.5" height="3.5" fill="#fff" stroke="#333" stroke-width="0.7"/><rect x="5" y="5" width="3.5" height="3.5" fill="#333"/></svg>
<svg class="a" style="left:23.5px;top:230.38px;" width="9" height="9" viewBox="0 0 9 9"><path d="M0.5 4l2-2h5v5l-2 2h-5z" fill="#f3cf2f" stroke="#a3811a" stroke-width="0.7"/><rect x="0.5" y="0.5" width="4.5" height="4.5" fill="#2d5fa8" stroke="#1c3f73" stroke-width="0.5"/><rect x="1.3" y="1.3" width="2.5" height="2.5" fill="#a8c4ea"/></svg>
<div class="t" style="left:33.5px;top:232.54px;font-size:6.4px;color:#222;font-weight:400;transform:scaleX(0.94);">566212_DSM_40_270_CC_FW_A_B___0_:1</div>
<svg class="a" style="left:4px;top:242.26px;" width="4" height="5" viewBox="0 0 4 5"><path d="M0.6 0.5L3 2.5 0.6 4.5" stroke="#777" stroke-width="0.8" fill="none"/></svg>
<div class="a" style="left:8.5px;top:244.76px;width:3px;height:0.8px;background:#c8c8c8;"></div>
<svg class="a" style="left:14px;top:240.26px;" width="9" height="9" viewBox="0 0 9 9"><path d="M0.5 2.5l2-2h6v6l-2 2h-6z" fill="#f3cf2f" stroke="#a3811a" stroke-width="0.7"/><path d="M0.5 2.5h6v6M6.5 2.5l2-2" stroke="#a3811a" stroke-width="0.6" fill="none"/><rect x="1" y="3" width="5" height="5" fill="#fbe36a"/></svg>
<div class="t" style="left:24px;top:242.42px;font-size:6.4px;color:#222;font-weight:400;transform:scaleX(0.94);">189653_ZBH_12:1</div>
<svg class="a" style="left:4px;top:252.14px;" width="4" height="5" viewBox="0 0 4 5"><path d="M0.6 0.5L3 2.5 0.6 4.5" stroke="#777" stroke-width="0.8" fill="none"/></svg>
<div class="a" style="left:8.5px;top:254.64px;width:3px;height:0.8px;background:#c8c8c8;"></div>
<svg class="a" style="left:14px;top:250.14px;" width="9" height="9" viewBox="0 0 9 9"><path d="M0.5 2.5l2-2h6v6l-2 2h-6z" fill="#f3cf2f" stroke="#a3811a" stroke-width="0.7"/><path d="M0.5 2.5h6v6M6.5 2.5l2-2" stroke="#a3811a" stroke-width="0.6" fill="none"/><rect x="1" y="3" width="5" height="5" fill="#fbe36a"/></svg>
<div class="t" style="left:24px;top:252.30px;font-size:6.4px;color:#222;font-weight:400;transform:scaleX(0.94);">189653_ZBH_12:2</div>
<svg class="a" style="left:4px;top:262.02000000000004px;" width="4" height="5" viewBox="0 0 4 5"><path d="M0.6 0.5L3 2.5 0.6 4.5" stroke="#777" stroke-width="0.8" fill="none"/></svg>
<div class="a" style="left:8.5px;top:264.52000000000004px;width:3px;height:0.8px;background:#c8c8c8;"></div>
<svg class="a" style="left:14px;top:260.02000000000004px;" width="9" height="9" viewBox="0 0 9 9"><path d="M0.5 2.5l2-2h6v6l-2 2h-6z" fill="#f3cf2f" stroke="#a3811a" stroke-width="0.7"/><path d="M0.5 2.5h6v6M6.5 2.5l2-2" stroke="#a3811a" stroke-width="0.6" fill="none"/><rect x="1" y="3" width="5" height="5" fill="#fbe36a"/></svg>
<div class="t" style="left:24px;top:262.18px;font-size:6.4px;color:#222;font-weight:400;transform:scaleX(0.94);">Befestigungsplatte Parallelgreifer_3:1</div>
<svg class="a" style="left:4px;top:271.90000000000003px;" width="4" height="5" viewBox="0 0 4 5"><path d="M0.6 0.5L3 2.5 0.6 4.5" stroke="#777" stroke-width="0.8" fill="none"/></svg>
<div class="a" style="left:8.5px;top:274.40000000000003px;width:3px;height:0.8px;background:#c8c8c8;"></div>
<svg class="a" style="left:14px;top:269.90000000000003px;" width="9" height="9" viewBox="0 0 9 9"><path d="M0.5 2.5l2-2h6v6l-2 2h-6z" fill="#f3cf2f" stroke="#a3811a" stroke-width="0.7"/><path d="M0.5 2.5h6v6M6.5 2.5l2-2" stroke="#a3811a" stroke-width="0.6" fill="none"/><rect x="1" y="3" width="5" height="5" fill="#fbe36a"/></svg>
<div class="t" style="left:24px;top:272.06px;font-size:6.4px;color:#222;font-weight:400;transform:scaleX(0.94);">189653_ZBH_12:3</div>
<svg class="a" style="left:4px;top:281.78000000000003px;" width="4" height="5" viewBox="0 0 4 5"><path d="M0.6 0.5L3 2.5 0.6 4.5" stroke="#777" stroke-width="0.8" fill="none"/></svg>
<div class="a" style="left:8.5px;top:284.28000000000003px;width:3px;height:0.8px;background:#c8c8c8;"></div>
<svg class="a" style="left:14px;top:279.78000000000003px;" width="9" height="9" viewBox="0 0 9 9"><path d="M0.5 2.5l2-2h6v6l-2 2h-6z" fill="#f3cf2f" stroke="#a3811a" stroke-width="0.7"/><path d="M0.5 2.5h6v6M6.5 2.5l2-2" stroke="#a3811a" stroke-width="0.6" fill="none"/><rect x="1" y="3" width="5" height="5" fill="#fbe36a"/></svg>
<div class="t" style="left:24px;top:281.94px;font-size:6.4px;color:#222;font-weight:400;transform:scaleX(0.94);">189653_ZBH_12:4</div>
<svg class="a" style="left:4px;top:291.66px;" width="4" height="5" viewBox="0 0 4 5"><path d="M0.6 0.5L3 2.5 0.6 4.5" stroke="#777" stroke-width="0.8" fill="none"/></svg>
<div class="a" style="left:8.5px;top:294.16px;width:3px;height:0.8px;background:#c8c8c8;"></div>
<svg class="a" style="left:14px;top:289.66px;" width="9" height="9" viewBox="0 0 9 9"><path d="M0.5 2.5l2-2h6v6l-2 2h-6z" fill="#f3cf2f" stroke="#a3811a" stroke-width="0.7"/><path d="M0.5 2.5h6v6M6.5 2.5l2-2" stroke="#a3811a" stroke-width="0.6" fill="none"/><rect x="1" y="3" width="5" height="5" fill="#fbe36a"/></svg>
<div class="t" style="left:24px;top:291.82px;font-size:6.4px;color:#222;font-weight:400;transform:scaleX(0.94);">Befestigungsplatte Parallelgreifer_2:1</div>
<svg class="a" style="left:4px;top:301.54px;" width="4" height="5" viewBox="0 0 4 5"><path d="M0.6 0.5L3 2.5 0.6 4.5" stroke="#777" stroke-width="0.8" fill="none"/></svg>
<div class="a" style="left:8.5px;top:304.04px;width:3px;height:0.8px;background:#c8c8c8;"></div>
<svg class="a" style="left:14px;top:299.54px;" width="9" height="9" viewBox="0 0 9 9"><path d="M0.5 2.5l2-2h6v6l-2 2h-6z" fill="#f3cf2f" stroke="#a3811a" stroke-width="0.7"/><path d="M0.5 2.5h6v6M6.5 2.5l2-2" stroke="#a3811a" stroke-width="0.6" fill="none"/><rect x="1" y="3" width="5" height="5" fill="#fbe36a"/></svg>
<div class="t" style="left:24px;top:301.70px;font-size:6.4px;color:#222;font-weight:400;transform:scaleX(0.94);">Greiferfinger:1</div>
<svg class="a" style="left:4px;top:311.42px;" width="4" height="5" viewBox="0 0 4 5"><path d="M0.6 0.5L3 2.5 0.6 4.5" stroke="#777" stroke-width="0.8" fill="none"/></svg>
<div class="a" style="left:8.5px;top:313.92px;width:3px;height:0.8px;background:#c8c8c8;"></div>
<svg class="a" style="left:14px;top:309.42px;" width="9" height="9" viewBox="0 0 9 9"><path d="M0.5 2.5l2-2h6v6l-2 2h-6z" fill="#f3cf2f" stroke="#a3811a" stroke-width="0.7"/><path d="M0.5 2.5h6v6M6.5 2.5l2-2" stroke="#a3811a" stroke-width="0.6" fill="none"/><rect x="1" y="3" width="5" height="5" fill="#fbe36a"/></svg>
<div class="t" style="left:24px;top:311.58px;font-size:6.4px;color:#222;font-weight:400;transform:scaleX(0.94);">Greiferfinger:2</div>
<svg class="a" style="left:4px;top:321.3px;" width="4" height="5" viewBox="0 0 4 5"><path d="M0.6 0.5L3 2.5 0.6 4.5" stroke="#777" stroke-width="0.8" fill="none"/></svg>
<div class="a" style="left:8.5px;top:323.8px;width:3px;height:0.8px;background:#c8c8c8;"></div>
<svg class="a" style="left:14px;top:319.3px;" width="9" height="9" viewBox="0 0 9 9"><path d="M0.5 2.5l2-2h6v6l-2 2h-6z" fill="#f3cf2f" stroke="#a3811a" stroke-width="0.7"/><path d="M0.5 2.5h6v6M6.5 2.5l2-2" stroke="#a3811a" stroke-width="0.6" fill="none"/><rect x="1" y="3" width="5" height="5" fill="#fbe36a"/></svg>
<div class="t" style="left:24px;top:321.46px;font-size:6.4px;color:#222;font-weight:400;transform:scaleX(0.94);">Greiferfinger:3</div>
<svg class="a" style="left:4px;top:331.18px;" width="4" height="5" viewBox="0 0 4 5"><path d="M0.6 0.5L3 2.5 0.6 4.5" stroke="#777" stroke-width="0.8" fill="none"/></svg>
<div class="a" style="left:8.5px;top:333.68px;width:3px;height:0.8px;background:#c8c8c8;"></div>
<svg class="a" style="left:14px;top:329.18px;" width="9" height="9" viewBox="0 0 9 9"><path d="M0.5 2.5l2-2h6v6l-2 2h-6z" fill="#f3cf2f" stroke="#a3811a" stroke-width="0.7"/><path d="M0.5 2.5h6v6M6.5 2.5l2-2" stroke="#a3811a" stroke-width="0.6" fill="none"/><rect x="1" y="3" width="5" height="5" fill="#fbe36a"/></svg>
<div class="t" style="left:24px;top:331.34px;font-size:6.4px;color:#222;font-weight:400;transform:scaleX(0.94);">Greiferfinger:4</div>
<svg class="a" style="left:4px;top:341.06px;" width="4" height="5" viewBox="0 0 4 5"><path d="M0.6 0.5L3 2.5 0.6 4.5" stroke="#777" stroke-width="0.8" fill="none"/></svg>
<div class="a" style="left:8.5px;top:343.56px;width:3px;height:0.8px;background:#c8c8c8;"></div>
<svg class="a" style="left:14px;top:339.06px;" width="9" height="9" viewBox="0 0 9 9"><path d="M0.5 2.5l2-2h6v6l-2 2h-6z" fill="#f3cf2f" stroke="#a3811a" stroke-width="0.7"/><path d="M0.5 2.5h6v6M6.5 2.5l2-2" stroke="#a3811a" stroke-width="0.6" fill="none"/><rect x="1" y="3" width="5" height="5" fill="#fbe36a"/></svg>
<div class="t" style="left:24px;top:341.22px;font-size:6.4px;color:#222;font-weight:400;transform:scaleX(0.94);">Einschubblech_2:1</div>
<svg class="a" style="left:4px;top:350.94px;" width="4" height="5" viewBox="0 0 4 5"><path d="M0.6 0.5L3 2.5 0.6 4.5" stroke="#777" stroke-width="0.8" fill="none"/></svg>
<div class="a" style="left:8.5px;top:353.44px;width:3px;height:0.8px;background:#c8c8c8;"></div>
<svg class="a" style="left:14px;top:348.94px;" width="9" height="9" viewBox="0 0 9 9"><path d="M0.5 2.5l2-2h6v6l-2 2h-6z" fill="#f3cf2f" stroke="#a3811a" stroke-width="0.7"/><path d="M0.5 2.5h6v6M6.5 2.5l2-2" stroke="#a3811a" stroke-width="0.6" fill="none"/><rect x="1" y="3" width="5" height="5" fill="#fbe36a"/></svg>
<div class="t" style="left:24px;top:351.10px;font-size:6.4px;color:#222;font-weight:400;transform:scaleX(0.94);">Adapter_1:1</div>
<svg class="a" style="left:4px;top:360.82px;" width="4" height="5" viewBox="0 0 4 5"><path d="M0.6 0.5L3 2.5 0.6 4.5" stroke="#777" stroke-width="0.8" fill="none"/></svg>
<div class="a" style="left:8.5px;top:363.32px;width:3px;height:0.8px;background:#c8c8c8;"></div>
<svg class="a" style="left:14px;top:358.82px;" width="9" height="9" viewBox="0 0 9 9"><path d="M0.5 2.5l2-2h6v6l-2 2h-6z" fill="#f3cf2f" stroke="#a3811a" stroke-width="0.7"/><path d="M0.5 2.5h6v6M6.5 2.5l2-2" stroke="#a3811a" stroke-width="0.6" fill="none"/><rect x="1" y="3" width="5" height="5" fill="#fbe36a"/></svg>
<div class="t" style="left:24px;top:360.98px;font-size:6.4px;color:#222;font-weight:400;transform:scaleX(0.94);">21580-16:1</div>
<svg class="a" style="left:4px;top:370.70000000000005px;" width="4" height="5" viewBox="0 0 4 5"><path d="M0.6 0.5L3 2.5 0.6 4.5" stroke="#777" stroke-width="0.8" fill="none"/></svg>
<div class="a" style="left:8.5px;top:373.20000000000005px;width:3px;height:0.8px;background:#c8c8c8;"></div>
<svg class="a" style="left:14px;top:368.70000000000005px;" width="9" height="9" viewBox="0 0 9 9"><path d="M0.5 2.5l2-2h6v6l-2 2h-6z" fill="#f3cf2f" stroke="#a3811a" stroke-width="0.7"/><path d="M0.5 2.5h6v6M6.5 2.5l2-2" stroke="#a3811a" stroke-width="0.6" fill="none"/><rect x="1" y="3" width="5" height="5" fill="#fbe36a"/></svg>
<div class="t" style="left:24px;top:370.86px;font-size:6.4px;color:#222;font-weight:400;transform:scaleX(0.94);">Blechrutsche Auslauf:1</div>
<svg class="a" style="left:4px;top:380.58px;" width="4" height="5" viewBox="0 0 4 5"><path d="M0.6 0.5L3 2.5 0.6 4.5" stroke="#777" stroke-width="0.8" fill="none"/></svg>
<div class="a" style="left:8.5px;top:383.08px;width:3px;height:0.8px;background:#c8c8c8;"></div>
<svg class="a" style="left:14px;top:378.58px;" width="9" height="9" viewBox="0 0 9 9"><rect x="0.5" y="0.5" width="3.5" height="3.5" fill="#333"/><rect x="5" y="0.5" width="3.5" height="3.5" fill="#fff" stroke="#333" stroke-width="0.7"/><rect x="0.5" y="5" width="3.5" height="3.5" fill="#fff" stroke="#333" stroke-width="0.7"/><rect x="5" y="5" width="3.5" height="3.5" fill="#333"/></svg>
<svg class="a" style="left:23.5px;top:378.58px;" width="9" height="9" viewBox="0 0 9 9"><path d="M0.5 4l2-2h5v5l-2 2h-5z" fill="#f3cf2f" stroke="#a3811a" stroke-width="0.7"/><rect x="0.5" y="0.5" width="4.5" height="4.5" fill="#2d5fa8" stroke="#1c3f73" stroke-width="0.5"/><rect x="1.3" y="1.3" width="2.5" height="2.5" fill="#a8c4ea"/></svg>
<div class="t" style="left:33.5px;top:380.74px;font-size:6.4px;color:#222;font-weight:400;transform:scaleX(0.94);">543987_DGSL_16_50_PA____0_:1</div>
<svg class="a" style="left:4px;top:390.46000000000004px;" width="4" height="5" viewBox="0 0 4 5"><path d="M0.6 0.5L3 2.5 0.6 4.5" stroke="#777" stroke-width="0.8" fill="none"/></svg>
<div class="a" style="left:8.5px;top:392.96000000000004px;width:3px;height:0.8px;background:#c8c8c8;"></div>
<svg class="a" style="left:14px;top:388.46000000000004px;" width="9" height="9" viewBox="0 0 9 9"><path d="M0.5 2.5l2-2h6v6l-2 2h-6z" fill="#f3cf2f" stroke="#a3811a" stroke-width="0.7"/><path d="M0.5 2.5h6v6M6.5 2.5l2-2" stroke="#a3811a" stroke-width="0.6" fill="none"/><rect x="1" y="3" width="5" height="5" fill="#fbe36a"/></svg>
<div class="t" style="left:24px;top:390.62px;font-size:6.4px;color:#222;font-weight:400;transform:scaleX(0.94);">21580-12:1</div>
<svg class="a" style="left:4px;top:400.34000000000003px;" width="4" height="5" viewBox="0 0 4 5"><path d="M0.6 0.5L3 2.5 0.6 4.5" stroke="#777" stroke-width="0.8" fill="none"/></svg>
<div class="a" style="left:8.5px;top:402.84000000000003px;width:3px;height:0.8px;background:#c8c8c8;"></div>
<svg class="a" style="left:14px;top:398.34000000000003px;" width="9" height="9" viewBox="0 0 9 9"><path d="M0.5 2.5l2-2h6v6l-2 2h-6z" fill="#f3cf2f" stroke="#a3811a" stroke-width="0.7"/><path d="M0.5 2.5h6v6M6.5 2.5l2-2" stroke="#a3811a" stroke-width="0.6" fill="none"/><rect x="1" y="3" width="5" height="5" fill="#fbe36a"/></svg>
<div class="t" style="left:24px;top:400.50px;font-size:6.4px;color:#222;font-weight:400;transform:scaleX(0.94);">21580-12:2</div>
<svg class="a" style="left:4px;top:410.22px;" width="4" height="5" viewBox="0 0 4 5"><path d="M0.6 0.5L3 2.5 0.6 4.5" stroke="#777" stroke-width="0.8" fill="none"/></svg>
<div class="a" style="left:8.5px;top:412.72px;width:3px;height:0.8px;background:#c8c8c8;"></div>
<svg class="a" style="left:14px;top:408.22px;" width="9" height="9" viewBox="0 0 9 9"><path d="M0.5 2.5l2-2h6v6l-2 2h-6z" fill="#f3cf2f" stroke="#a3811a" stroke-width="0.7"/><path d="M0.5 2.5h6v6M6.5 2.5l2-2" stroke="#a3811a" stroke-width="0.6" fill="none"/><rect x="1" y="3" width="5" height="5" fill="#fbe36a"/></svg>
<div class="t" style="left:24px;top:410.38px;font-size:6.4px;color:#222;font-weight:400;transform:scaleX(0.94);">Welle:1</div>
<svg class="a" style="left:4px;top:420.1px;" width="4" height="5" viewBox="0 0 4 5"><path d="M0.6 0.5L3 2.5 0.6 4.5" stroke="#777" stroke-width="0.8" fill="none"/></svg>
<div class="a" style="left:8.5px;top:422.6px;width:3px;height:0.8px;background:#c8c8c8;"></div>
<svg class="a" style="left:14px;top:418.1px;" width="9" height="9" viewBox="0 0 9 9"><path d="M0.5 4l2-2h5v5l-2 2h-5z" fill="#f3cf2f" stroke="#a3811a" stroke-width="0.7"/><rect x="0.5" y="0.5" width="4.5" height="4.5" fill="#2d5fa8" stroke="#1c3f73" stroke-width="0.5"/><rect x="1.3" y="1.3" width="2.5" height="2.5" fill="#a8c4ea"/></svg>
<div class="t" style="left:24px;top:420.26px;font-size:6.4px;color:#222;font-weight:400;transform:scaleX(0.94);">RJUM-05-12:1</div>
<svg class="a" style="left:4px;top:429.98px;" width="4" height="5" viewBox="0 0 4 5"><path d="M0.6 0.5L3 2.5 0.6 4.5" stroke="#777" stroke-width="0.8" fill="none"/></svg>
<div class="a" style="left:8.5px;top:432.48px;width:3px;height:0.8px;background:#c8c8c8;"></div>
<svg class="a" style="left:14px;top:427.98px;" width="9" height="9" viewBox="0 0 9 9"><path d="M0.5 4l2-2h5v5l-2 2h-5z" fill="#f3cf2f" stroke="#a3811a" stroke-width="0.7"/><rect x="0.5" y="0.5" width="4.5" height="4.5" fill="#2d5fa8" stroke="#1c3f73" stroke-width="0.5"/><rect x="1.3" y="1.3" width="2.5" height="2.5" fill="#a8c4ea"/></svg>
<div class="t" style="left:24px;top:430.14px;font-size:6.4px;color:#222;font-weight:400;transform:scaleX(0.94);">RJUM-05-12:2</div>
<svg class="a" style="left:4px;top:439.86px;" width="4" height="5" viewBox="0 0 4 5"><path d="M0.6 0.5L3 2.5 0.6 4.5" stroke="#777" stroke-width="0.8" fill="none"/></svg>
<div class="a" style="left:8.5px;top:442.36px;width:3px;height:0.8px;background:#c8c8c8;"></div>
<svg class="a" style="left:14px;top:437.86px;" width="9" height="9" viewBox="0 0 9 9"><rect x="0.5" y="0.5" width="3.5" height="3.5" fill="#333"/><rect x="5" y="0.5" width="3.5" height="3.5" fill="#fff" stroke="#333" stroke-width="0.7"/><rect x="0.5" y="5" width="3.5" height="3.5" fill="#fff" stroke="#333" stroke-width="0.7"/><rect x="5" y="5" width="3.5" height="3.5" fill="#333"/></svg>
<svg class="a" style="left:23.5px;top:437.86px;" width="9" height="9" viewBox="0 0 9 9"><path d="M0.5 4l2-2h5v5l-2 2h-5z" fill="#f3cf2f" stroke="#a3811a" stroke-width="0.7"/><rect x="0.5" y="0.5" width="4.5" height="4.5" fill="#2d5fa8" stroke="#1c3f73" stroke-width="0.5"/><rect x="1.3" y="1.3" width="2.5" height="2.5" fill="#a8c4ea"/></svg>
<div class="t" style="left:33.5px;top:440.02px;font-size:6.4px;color:#222;font-weight:400;transform:scaleX(0.94);">1908266_DSNU_16_10_PPV_A____0_:1</div>
<svg class="a" style="left:4px;top:449.74px;" width="4" height="5" viewBox="0 0 4 5"><path d="M0.6 0.5L3 2.5 0.6 4.5" stroke="#777" stroke-width="0.8" fill="none"/></svg>
<div class="a" style="left:8.5px;top:452.24px;width:3px;height:0.8px;background:#c8c8c8;"></div>
<svg class="a" style="left:14px;top:447.74px;" width="9" height="9" viewBox="0 0 9 9"><path d="M0.5 4l2-2h5v5l-2 2h-5z" fill="#f3cf2f" stroke="#a3811a" stroke-width="0.7"/><rect x="0.5" y="0.5" width="4.5" height="4.5" fill="#2d5fa8" stroke="#1c3f73" stroke-width="0.5"/><rect x="1.3" y="1.3" width="2.5" height="2.5" fill="#a8c4ea"/></svg>
<div class="t" style="left:24px;top:449.90px;font-size:6.4px;color:#222;font-weight:400;transform:scaleX(0.94);">6058_LBN_12_16:1</div>
<svg class="a" style="left:4px;top:459.62px;" width="4" height="5" viewBox="0 0 4 5"><path d="M0.6 0.5L3 2.5 0.6 4.5" stroke="#777" stroke-width="0.8" fill="none"/></svg>
<div class="a" style="left:8.5px;top:462.12px;width:3px;height:0.8px;background:#c8c8c8;"></div>
<svg class="a" style="left:14px;top:457.62px;" width="9" height="9" viewBox="0 0 9 9"><path d="M0.5 2.5l2-2h6v6l-2 2h-6z" fill="#f3cf2f" stroke="#a3811a" stroke-width="0.7"/><path d="M0.5 2.5h6v6M6.5 2.5l2-2" stroke="#a3811a" stroke-width="0.6" fill="none"/><rect x="1" y="3" width="5" height="5" fill="#fbe36a"/></svg>
<div class="t" style="left:24px;top:459.78px;font-size:6.4px;color:#222;font-weight:400;transform:scaleX(0.94);">Einschubblech_3:1</div>
<svg class="a" style="left:4px;top:469.5px;" width="4" height="5" viewBox="0 0 4 5"><path d="M0.6 0.5L3 2.5 0.6 4.5" stroke="#777" stroke-width="0.8" fill="none"/></svg>
<div class="a" style="left:8.5px;top:472.0px;width:3px;height:0.8px;background:#c8c8c8;"></div>
<svg class="a" style="left:14px;top:467.5px;" width="9" height="9" viewBox="0 0 9 9"><path d="M0.5 4l2-2h5v5l-2 2h-5z" fill="#f3cf2f" stroke="#a3811a" stroke-width="0.7"/><rect x="0.5" y="0.5" width="4.5" height="4.5" fill="#2d5fa8" stroke="#1c3f73" stroke-width="0.5"/><rect x="1.3" y="1.3" width="2.5" height="2.5" fill="#a8c4ea"/></svg>
<div class="t" style="left:24px;top:469.66px;font-size:6.4px;color:#222;font-weight:400;transform:scaleX(0.94);">9254_SGS_M6____0_0_:1</div>
<svg class="a" style="left:4px;top:479.38px;" width="4" height="5" viewBox="0 0 4 5"><path d="M0.6 0.5L3 2.5 0.6 4.5" stroke="#777" stroke-width="0.8" fill="none"/></svg>
<div class="a" style="left:8.5px;top:481.88px;width:3px;height:0.8px;background:#c8c8c8;"></div>
<svg class="a" style="left:14px;top:477.38px;" width="9" height="9" viewBox="0 0 9 9"><path d="M0.5 2.5l2-2h6v6l-2 2h-6z" fill="#f3cf2f" stroke="#a3811a" stroke-width="0.7"/><path d="M0.5 2.5h6v6M6.5 2.5l2-2" stroke="#a3811a" stroke-width="0.6" fill="none"/><rect x="1" y="3" width="5" height="5" fill="#fbe36a"/></svg>
<div class="t" style="left:24px;top:479.54px;font-size:6.4px;color:#222;font-weight:400;transform:scaleX(0.94);">Gabelkopf:1</div>
<svg class="a" style="left:4px;top:489.26px;" width="4" height="5" viewBox="0 0 4 5"><path d="M0.6 0.5L3 2.5 0.6 4.5" stroke="#777" stroke-width="0.8" fill="none"/></svg>
<div class="a" style="left:8.5px;top:491.76px;width:3px;height:0.8px;background:#c8c8c8;"></div>
<svg class="a" style="left:14px;top:487.26px;" width="9" height="9" viewBox="0 0 9 9"><path d="M0.5 2.5l2-2h6v6l-2 2h-6z" fill="#f3cf2f" stroke="#a3811a" stroke-width="0.7"/><path d="M0.5 2.5h6v6M6.5 2.5l2-2" stroke="#a3811a" stroke-width="0.6" fill="none"/><rect x="1" y="3" width="5" height="5" fill="#fbe36a"/></svg>
<div class="t" style="left:24px;top:489.42px;font-size:6.4px;color:#222;font-weight:400;transform:scaleX(0.94);">1HHKS100:1</div>
<svg class="a" style="left:4px;top:499.14000000000004px;" width="4" height="5" viewBox="0 0 4 5"><path d="M0.6 0.5L3 2.5 0.6 4.5" stroke="#777" stroke-width="0.8" fill="none"/></svg>
<div class="a" style="left:8.5px;top:501.64000000000004px;width:3px;height:0.8px;background:#c8c8c8;"></div>
<svg class="a" style="left:14px;top:497.14000000000004px;" width="9" height="9" viewBox="0 0 9 9"><path d="M0.5 2.5l2-2h6v6l-2 2h-6z" fill="#f3cf2f" stroke="#a3811a" stroke-width="0.7"/><path d="M0.5 2.5h6v6M6.5 2.5l2-2" stroke="#a3811a" stroke-width="0.6" fill="none"/><rect x="1" y="3" width="5" height="5" fill="#fbe36a"/></svg>
<div class="t" style="left:24px;top:499.30px;font-size:6.4px;color:#222;font-weight:400;transform:scaleX(0.94);">2HHKS100:1</div>
<svg class="a" style="left:4px;top:509.02000000000004px;" width="4" height="5" viewBox="0 0 4 5"><path d="M0.6 0.5L3 2.5 0.6 4.5" stroke="#777" stroke-width="0.8" fill="none"/></svg>
<div class="a" style="left:8.5px;top:511.52000000000004px;width:3px;height:0.8px;background:#c8c8c8;"></div>
<svg class="a" style="left:14px;top:507.02000000000004px;" width="9" height="9" viewBox="0 0 9 9"><path d="M0.5 2.5l2-2h6v6l-2 2h-6z" fill="#f3cf2f" stroke="#a3811a" stroke-width="0.7"/><path d="M0.5 2.5h6v6M6.5 2.5l2-2" stroke="#a3811a" stroke-width="0.6" fill="none"/><rect x="1" y="3" width="5" height="5" fill="#fbe36a"/></svg>
<div class="t" style="left:24px;top:509.18px;font-size:6.4px;color:#222;font-weight:400;transform:scaleX(0.94);">pHHKS100:1</div>
<svg class="a" style="left:4px;top:518.9000000000001px;" width="4" height="5" viewBox="0 0 4 5"><path d="M0.6 0.5L3 2.5 0.6 4.5" stroke="#777" stroke-width="0.8" fill="none"/></svg>
<div class="a" style="left:8.5px;top:521.4000000000001px;width:3px;height:0.8px;background:#c8c8c8;"></div>
<svg class="a" style="left:14px;top:516.9000000000001px;" width="9" height="9" viewBox="0 0 9 9"><path d="M0.5 2.5l2-2h6v6l-2 2h-6z" fill="#f3cf2f" stroke="#a3811a" stroke-width="0.7"/><path d="M0.5 2.5h6v6M6.5 2.5l2-2" stroke="#a3811a" stroke-width="0.6" fill="none"/><rect x="1" y="3" width="5" height="5" fill="#fbe36a"/></svg>
<div class="t" style="left:24px;top:519.06px;font-size:6.4px;color:#222;font-weight:400;transform:scaleX(0.94);">1HHKS100:2</div>
<svg class="a" style="left:4px;top:528.7800000000001px;" width="4" height="5" viewBox="0 0 4 5"><path d="M0.6 0.5L3 2.5 0.6 4.5" stroke="#777" stroke-width="0.8" fill="none"/></svg>
<div class="a" style="left:8.5px;top:531.2800000000001px;width:3px;height:0.8px;background:#c8c8c8;"></div>
<svg class="a" style="left:14px;top:526.7800000000001px;" width="9" height="9" viewBox="0 0 9 9"><path d="M0.5 2.5l2-2h6v6l-2 2h-6z" fill="#f3cf2f" stroke="#a3811a" stroke-width="0.7"/><path d="M0.5 2.5h6v6M6.5 2.5l2-2" stroke="#a3811a" stroke-width="0.6" fill="none"/><rect x="1" y="3" width="5" height="5" fill="#fbe36a"/></svg>
<div class="t" style="left:24px;top:528.94px;font-size:6.4px;color:#222;font-weight:400;transform:scaleX(0.94);">2HHKS100:2</div>
<div class="a" style="left:178px;top:111px;width:12px;height:422px;background:#f5f5f5;"></div>
<div class="a" style="left:180px;top:121px;width:8px;height:111px;background:#cdcdcd;"></div>
<svg class="a" style="left:180px;top:113px;" width="6" height="5" viewBox="0 0 6 5"><path d="M0.5 4L3 1.5 5.5 4" stroke="#333" stroke-width="1" fill="none"/></svg>
<svg class="a" style="left:180px;top:528px;" width="6" height="5" viewBox="0 0 6 5"><path d="M0.5 1L3 3.5 5.5 1" stroke="#333" stroke-width="1" fill="none"/></svg>
<div class="a" style="left:0px;top:533px;width:190px;height:23px;background:#f3f3f3;"></div>
<div class="a" style="left:10.5px;top:533.5px;width:150px;height:7.5px;background:#cdcdcd;"></div>
<svg class="a" style="left:3px;top:534.5px;" width="5" height="6" viewBox="0 0 5 6"><path d="M4 0.5L1.5 3 4 5.5" stroke="#333" stroke-width="1" fill="none"/></svg>
<svg class="a" style="left:172px;top:534.5px;" width="5" height="6" viewBox="0 0 5 6"><path d="M1 0.5L3.5 3 1 5.5" stroke="#333" stroke-width="1" fill="none"/></svg>
<div class="a" style="left:0px;top:555.5px;width:190px;height:1px;background:#d9d9d9;"></div>
<div class="a" style="left:190px;top:77px;width:834px;height:466.5px;background:linear-gradient(#323232 0%,#555 35%,#7c7c7c 65%,#a3a3a3 100%);"></div>
<svg class="a" style="left:0;top:0" width="1024" height="568" viewBox="0 0 1024 568">
<defs><filter id="bl" x="-30%" y="-80%" width="160%" height="260%"><feGaussianBlur stdDeviation="5"/></filter><filter id="bl1" x="-10%" y="-10%" width="120%" height="120%"><feGaussianBlur stdDeviation="0.5"/></filter></defs>
<polygon points="593.0,476.0 810.0,397.0 836.0,401.0 834.0,411.0 625.0,492.0 597.0,486.0 519.0,428.5" fill="#3a3a3a" filter="url(#bl)" opacity="0.7"/>
<rect x="593.0" y="470.0" width="4" height="8" fill="#3a3a3a"/><ellipse cx="595.0" cy="478.0" rx="3" ry="1.6" fill="#5a5a5a"/><rect x="592.0" y="475.0" width="6" height="3" fill="#4a4a4a"/>
<rect x="804.0" y="393.0" width="4" height="8" fill="#3a3a3a"/><ellipse cx="806.0" cy="401.0" rx="3" ry="1.6" fill="#5a5a5a"/><rect x="803.0" y="398.0" width="6" height="3" fill="#4a4a4a"/>
<rect x="519.0" y="419.5" width="4" height="8" fill="#3a3a3a"/><ellipse cx="521.0" cy="427.5" rx="3" ry="1.6" fill="#5a5a5a"/><rect x="518.0" y="424.5" width="6" height="3" fill="#4a4a4a"/>
<polygon points="595.0,470.8 521.0,420.3 521.0,237.5 595.0,288.0" fill="#1a1a1a" stroke="#1a1a1a" stroke-width="0.35" />
<polygon points="595.0,470.8 806.0,393.8 806.0,211.0 595.0,288.0" fill="#1a1a1a" stroke="#1a1a1a" stroke-width="0.35" />
<polygon points="595.0,288.0 806.0,211.0 732.0,160.5 521.0,237.5" fill="#e8e9ea" stroke="#e8e9ea" stroke-width="0.35" />
<polygon points="595.3,282.9 626.1,271.6 561.7,227.7 530.9,238.9" fill="#383838" stroke="#383838" stroke-width="0.35" />
<polygon points="631.1,269.8 745.3,228.1 680.9,184.2 566.7,225.8" fill="#383838" stroke="#383838" stroke-width="0.35" />
<polygon points="750.3,226.3 796.1,209.6 731.7,165.6 686.0,182.3" fill="#383838" stroke="#383838" stroke-width="0.35" />
<rect x="529" y="239.7" width="9" height="5" rx="1" fill="#e6e6e6"/>
<rect x="545" y="250" width="9" height="5" rx="1" fill="#e6e6e6"/>
<rect x="714" y="202" width="7" height="5" rx="1" fill="#dcdcdc"/>
<polygon points="595.0,291.2 521.0,240.7 521.0,237.5 595.0,288.0" fill="#d8d9da" stroke="#d8d9da" stroke-width="0.35" />
<polygon points="595.0,470.8 521.0,420.3 521.0,413.3 595.0,463.8" fill="#d0d1d3" stroke="#d0d1d3" stroke-width="0.35" />
<polygon points="523.7,422.2 521.0,420.3 521.0,237.5 523.7,239.4" fill="#c9cacc" stroke="#c9cacc" stroke-width="0.35" />
<polygon points="595.0,470.8 591.3,468.3 591.3,285.5 595.0,288.0" fill="#8e8f90" stroke="#8e8f90" stroke-width="0.35" />
<polygon points="567.4,342.8 523.7,313.0 523.7,242.5 567.4,272.3" fill="#b4b6b8" stroke="#b4b6b8" stroke-width="0.35" />
<polygon points="567.4,342.8 523.7,313.0 523.7,306.0 567.4,335.8" fill="#c9cbcd" stroke="#c9cbcd" stroke-width="0.35" />
<polygon points="567.4,277.7 523.7,247.9 523.7,242.5 567.4,272.3" fill="#c4c6c8" stroke="#c4c6c8" stroke-width="0.35" />
<polygon points="533.7,307.2 526.8,302.4 526.8,248.9 533.7,253.6" fill="#6a6c6e" stroke="#6a6c6e" stroke-width="0.35" />
<polygon points="532.8,305.1 527.7,301.6 527.7,250.6 532.8,254.1" fill="#303030" stroke="#303030" stroke-width="0.35" />
<polygon points="546.9,316.2 537.3,309.6 537.3,256.1 546.9,262.6" fill="#6a6c6e" stroke="#6a6c6e" stroke-width="0.35" />
<polygon points="546.0,314.1 538.2,308.7 538.2,257.8 546.0,263.1" fill="#303030" stroke="#303030" stroke-width="0.35" />
<polygon points="562.0,326.5 550.8,318.9 550.8,265.3 562.0,272.9" fill="#6a6c6e" stroke="#6a6c6e" stroke-width="0.35" />
<polygon points="561.1,324.4 551.7,318.0 551.7,267.0 561.1,273.4" fill="#303030" stroke="#303030" stroke-width="0.35" />
<polygon points="560.2,320.1 552.8,315.0 552.8,303.9 560.2,308.9" fill="#6a6a6a" stroke="#6a6a6a" stroke-width="0.35" />
<polygon points="558.7,307.9 554.3,304.9 554.3,286.3 558.7,289.3" fill="#505050" stroke="#505050" stroke-width="0.35" />
<polygon points="543.2,308.4 540.2,306.4 540.2,287.8 543.2,289.8" fill="#4a4a4a" stroke="#4a4a4a" stroke-width="0.35" />
<polygon points="593.5,357.7 567.4,339.8 567.4,272.3 593.5,290.2" fill="#1b1b1b" stroke="#1b1b1b" stroke-width="0.35" />
<polygon points="593.5,462.8 558.7,439.0 558.7,342.3 593.5,366.0" fill="#1b1b1b" stroke="#1b1b1b" stroke-width="0.35" />
<polygon points="555.4,436.8 523.7,415.1 523.7,318.4 555.4,340.0" fill="#1b1b1b" stroke="#1b1b1b" stroke-width="0.35" />
<polygon points="558.7,439.0 555.4,436.8 555.4,334.6 558.7,336.9" fill="#d0d1d3" stroke="#d0d1d3" stroke-width="0.35" />
<polygon points="593.5,366.0 523.7,318.4 523.7,313.0 593.5,360.6" fill="#d0d1d3" stroke="#d0d1d3" stroke-width="0.35" />
<rect x="517.6" y="267.8" width="3.2" height="22" fill="#1a1a1a"/><rect x="519" y="267.8" width="3.5" height="2.5" fill="#1a1a1a"/><rect x="519" y="287.3" width="3.5" height="2.5" fill="#1a1a1a"/>
<polygon points="595.0,294.5 806.0,217.5 806.0,211.0 595.0,288.0" fill="#e2e3e4" stroke="#e2e3e4" stroke-width="0.35" />
<polygon points="595.0,470.8 806.0,393.8 806.0,385.5 595.0,462.5" fill="#d2d3d5" stroke="#d2d3d5" stroke-width="0.35" />
<polygon points="598.6,461.2 645.0,444.2 645.0,347.9 598.6,364.8" fill="#1c1c1c" stroke="#1c1c1c" stroke-width="0.35" />
<polygon points="601.3,388.9 637.2,375.8 637.2,354.4 601.3,367.5" fill="#5e5e5e" stroke="#5e5e5e" stroke-width="0.35" />
<polygon points="605.5,382.7 641.4,369.6 641.4,364.1 605.5,377.1" fill="#7a7a7a" stroke="#7a7a7a" stroke-width="0.35" />
<polygon points="624.5,370.2 642.5,363.7 642.5,349.7 624.5,356.3" fill="#505050" stroke="#505050" stroke-width="0.35" />
<polygon points="601.3,397.3 639.3,383.4 639.3,377.8 601.3,391.7" fill="#3e3e3e" stroke="#3e3e3e" stroke-width="0.35" />
<polygon points="598.6,410.4 645.0,393.4 645.0,386.9 598.6,403.9" fill="#262626" stroke="#262626" stroke-width="0.35" />
<polygon points="598.6,416.9 645.0,400.0 645.0,393.4 598.6,410.4" fill="#cacccd" stroke="#cacccd" stroke-width="0.35" />
<polygon points="606.6,451.2 624.5,444.6 624.5,424.2 606.6,430.7" fill="#8a8c8e" stroke="#8a8c8e" stroke-width="0.35" />
<polygon points="608.7,448.5 612.9,447.0 612.9,430.3 608.7,431.8" fill="#b8b8b8" stroke="#b8b8b8" stroke-width="0.35" />
<polygon points="617.2,445.5 621.4,443.9 621.4,427.2 617.2,428.7" fill="#b8b8b8" stroke="#b8b8b8" stroke-width="0.35" />
<polygon points="607.7,430.3 615.0,427.6 615.0,416.5 607.7,419.2" fill="#0c0c0c" stroke="#0c0c0c" stroke-width="0.35" />
<polygon points="616.1,427.2 623.5,424.5 623.5,413.4 616.1,416.1" fill="#0c0c0c" stroke="#0c0c0c" stroke-width="0.35" />
<polygon points="645.0,444.2 649.4,442.6 649.4,346.3 645.0,347.9" fill="#d2d3d5" stroke="#d2d3d5" stroke-width="0.35" />
<polygon points="649.4,352.2 717.4,327.4 717.4,317.7 649.4,342.5" fill="#1b1b1b" stroke="#1b1b1b" stroke-width="0.35" />
<polygon points="649.4,442.2 717.4,417.4 717.4,327.4 649.4,352.2" fill="#5c5e5c" stroke="#5c5e5c" stroke-width="0.35" />
<polygon points="721.6,415.5 750.1,405.1 750.1,303.8 721.6,314.2" fill="#1b1b1b" stroke="#1b1b1b" stroke-width="0.35" />
<polygon points="757.0,402.6 799.7,387.0 799.7,349.1 757.0,364.6" fill="#1b1b1b" stroke="#1b1b1b" stroke-width="0.35" />
<polygon points="757.0,364.6 799.7,349.1 799.7,336.8 757.0,352.4" fill="#cfd1d3" stroke="#cfd1d3" stroke-width="0.35" />
<polygon points="598.6,364.8 649.4,346.3 649.4,327.7 598.6,346.2" fill="#d2d3d5" stroke="#d2d3d5" stroke-width="0.35" />
<polygon points="649.4,342.5 717.4,317.7 717.4,302.9 649.4,327.7" fill="#d2d3d5" stroke="#d2d3d5" stroke-width="0.35" />
<polygon points="598.6,364.8 649.4,346.3 649.4,344.4 598.6,363.0" fill="#b4b6b8" stroke="#b4b6b8" stroke-width="0.35" />
<polygon points="598.6,346.2 717.4,302.9 717.4,249.9 598.6,293.2" fill="#d4d6d8" stroke="#d4d6d8" stroke-width="0.35" />
<polygon points="603.0,342.7 626.0,334.3 626.0,287.1 603.0,295.5" fill="#333333" stroke="#333333" stroke-width="0.35" />
<polygon points="631.1,332.5 652.5,324.7 652.5,277.4 631.1,285.2" fill="#333333" stroke="#333333" stroke-width="0.35" />
<polygon points="661.0,321.6 712.1,302.9 712.1,255.7 661.0,274.3" fill="#333333" stroke="#333333" stroke-width="0.35" />
<polygon points="604.5,340.3 610.8,338.0 610.8,295.2 604.5,297.6" fill="#5e5e5e" stroke="#5e5e5e" stroke-width="0.35" />
<polygon points="605.5,336.2 608.7,335.1 608.7,296.0 605.5,297.2" fill="#8a8a8a" stroke="#8a8a8a" stroke-width="0.35" />
<polygon points="614.0,336.9 625.6,332.6 625.6,324.3 614.0,328.5" fill="#0e0e0e" stroke="#0e0e0e" stroke-width="0.35" />
<polygon points="604.5,325.5 625.6,317.8 625.6,314.0 604.5,321.7" fill="#7c7c7c" stroke="#7c7c7c" stroke-width="0.35" />
<polygon points="616.1,317.5 619.3,316.3 619.3,292.2 616.1,293.3" fill="#6c6c6c" stroke="#6c6c6c" stroke-width="0.35" />
<polygon points="603.4,309.1 607.7,307.6 607.7,302.0 603.4,303.5" fill="#8a3a3a" stroke="#8a3a3a" stroke-width="0.35" />
<polygon points="631.9,321.0 652.0,313.7 652.0,310.0 631.9,317.3" fill="#8e8e8e" stroke="#8e8e8e" stroke-width="0.35" />
<polygon points="633.0,311.3 649.9,305.2 649.9,299.6 633.0,305.8" fill="#9a9a9a" stroke="#9a9a9a" stroke-width="0.35" />
<polygon points="635.1,305.0 647.8,300.4 647.8,283.6 635.1,288.2" fill="#707070" stroke="#707070" stroke-width="0.35" />
<polygon points="637.2,298.6 645.6,295.6 645.6,288.1 637.2,291.2" fill="#a0a0a0" stroke="#a0a0a0" stroke-width="0.35" />
<polygon points="631.9,330.3 652.0,323.0 652.0,316.5 631.9,323.8" fill="#151515" stroke="#151515" stroke-width="0.35" />
<polygon points="662.5,308.0 685.7,299.5 685.7,267.9 662.5,276.4" fill="#686868" stroke="#686868" stroke-width="0.35" />
<polygon points="664.6,299.8 683.6,292.9 683.6,279.8 664.6,286.8" fill="#8e8e8e" stroke="#8e8e8e" stroke-width="0.35" />
<polygon points="668.9,285.2 679.4,281.4 679.4,272.1 668.9,275.9" fill="#a5a5a5" stroke="#a5a5a5" stroke-width="0.35" />
<polygon points="662.5,313.6 692.1,302.8 692.1,297.2 662.5,308.0" fill="#4a4a4a" stroke="#4a4a4a" stroke-width="0.35" />
<polygon points="664.6,318.4 690.0,309.2 690.0,305.4 664.6,314.7" fill="#111" stroke="#111" stroke-width="0.35" />
<polygon points="690.0,311.0 712.1,302.9 712.1,255.7 690.0,263.8" fill="#121212" stroke="#121212" stroke-width="0.35" />
<polygon points="607.7,339.2 608.9,338.7 608.9,295.9 607.7,296.4" fill="#a8a8a8" stroke="#a8a8a8" stroke-width="0.35" />
<polygon points="620.3,334.6 621.6,334.1 621.6,291.3 620.3,291.8" fill="#9a9a9a" stroke="#9a9a9a" stroke-width="0.35" />
<polygon points="604.5,310.6 625.6,302.9 625.6,301.8 604.5,309.5" fill="#a0a0a0" stroke="#a0a0a0" stroke-width="0.35" />
<polygon points="635.1,329.2 636.4,328.7 636.4,285.9 635.1,286.4" fill="#a0a0a0" stroke="#a0a0a0" stroke-width="0.35" />
<polygon points="647.8,320.8 649.0,320.4 649.0,281.3 647.8,281.8" fill="#9a9a9a" stroke="#9a9a9a" stroke-width="0.35" />
<polygon points="631.9,293.1 652.0,285.8 652.0,284.7 631.9,292.0" fill="#aaa" stroke="#aaa" stroke-width="0.35" />
<polygon points="666.7,310.2 668.0,309.7 668.0,274.4 666.7,274.8" fill="#a5a5a5" stroke="#a5a5a5" stroke-width="0.35" />
<polygon points="683.6,304.0 684.9,303.6 684.9,268.2 683.6,268.7" fill="#a5a5a5" stroke="#a5a5a5" stroke-width="0.35" />
<polygon points="662.5,282.0 690.0,272.0 690.0,270.8 662.5,280.8" fill="#b0b0b0" stroke="#b0b0b0" stroke-width="0.35" />
<rect x="656" y="289" width="5" height="25" fill="#1c1c1c"/><rect x="660" y="289" width="4" height="3" fill="#1c1c1c"/><rect x="660" y="311" width="4" height="3" fill="#1c1c1c"/>
<polygon points="717.4,426.2 721.6,424.6 721.6,241.8 717.4,243.3" fill="#d2d3d5" stroke="#d2d3d5" stroke-width="0.35" />
<polygon points="721.6,314.2 750.1,303.8 750.1,294.6 721.6,305.0" fill="#d2d3d5" stroke="#d2d3d5" stroke-width="0.35" />
<polygon points="721.6,305.0 750.1,294.6 750.1,237.9 721.6,248.3" fill="#1b1b1b" stroke="#1b1b1b" stroke-width="0.35" />
<polygon points="725.3,249.7 748.2,242.6 748.2,261.0 725.3,268.0" fill="#e6e8ea" stroke="#e6e8ea" stroke-width="0.35" />
<polygon points="726.8,251.0 746.8,244.6 746.8,259.6 726.8,266.0" fill="#8aaee0" stroke="#8aaee0" stroke-width="0.35" />
<circle cx="726.4" cy="277.2" r="1.8" fill="#3a78c0"/>
<circle cx="733.4" cy="274.6" r="1.8" fill="#4a9a5a"/>
<circle cx="748" cy="269.8" r="1.8" fill="#d83030"/>
<polygon points="750.1,414.2 757.0,411.7 757.0,228.9 750.1,231.4" fill="#d2d3d5" stroke="#d2d3d5" stroke-width="0.35" />
<polygon points="757.0,352.4 799.7,336.8 799.7,219.8 757.0,235.4" fill="#d4d6d8" stroke="#d4d6d8" stroke-width="0.35" />
<polygon points="760.0,345.0 796.5,331.6 796.5,223.8 760.0,237.1" fill="#1e1e1e" stroke="#1e1e1e" stroke-width="0.35" />
<polygon points="767.0,281.0 771.2,279.5 771.2,233.0 767.0,234.5" fill="#4a4a4a" stroke="#4a4a4a" stroke-width="0.35" />
<polygon points="759.7,272.0 789.6,294.9 789.6,295.0 759.7,302.8" fill="#8d9093" stroke="#8d9093" stroke-width="0.35" />
<polygon points="759.7,302.8 789.6,295.0 789.6,336.2 759.7,343.3" fill="#6a6e72" stroke="#6a6e72" stroke-width="0.35" />
<circle cx="772" cy="318" r="3.2" fill="#8a8d90"/>
<polygon points="759.7,343.3 797.5,333.5 797.5,337.0 759.7,347.0" fill="#9a9c9e" stroke="#9a9c9e" stroke-width="0.35" />
<polygon points="799.7,396.1 806.0,393.8 806.0,211.0 799.7,213.3" fill="#d0d1d2" stroke="#d0d1d2" stroke-width="0.35" />
<polygon points="595.0,470.8 598.6,469.5 598.6,286.7 595.0,288.0" fill="#d2d3d5" stroke="#d2d3d5" stroke-width="0.35" />
<rect x="805" y="209.5" width="5" height="189" fill="#d4d5d6"/><rect x="809" y="209.5" width="1" height="189" fill="#9a9a9a"/>
<rect x="806" y="270" width="3" height="24" fill="#161616"/><rect x="802.5" y="270" width="5" height="3" fill="#161616"/><rect x="802.5" y="291" width="5" height="3" fill="#161616"/>
<rect x="804" y="208" width="4" height="3" fill="#222"/>
<line x1="595.0" y1="288.0" x2="806.0" y2="211.0" stroke="#f4f4f4" stroke-width="1"/>
<line x1="595.0" y1="288.0" x2="521.0" y2="237.5" stroke="#f0f0f0" stroke-width="1"/>
<rect x="592.5" y="286.5" width="5" height="3.5" fill="#222"/>
<rect x="519.0" y="236.5" width="4" height="2.5" fill="#222"/>
<rect x="730.0" y="159.5" width="4" height="2.5" fill="#222"/>
</svg>
<svg class="a" style="left:960px;top:95px;" width="64" height="60" viewBox="0 0 64 60"><polygon points="34,9.7 51.7,17.6 49.9,39.6 27.9,48.9 14.7,38.7 12.9,15.8" fill="#8a8a8a" stroke="#2e2e2e" stroke-width="1"/><polygon points="34,9.7 51.7,17.6 30,26 12.9,15.8" fill="#8f8f8f"/><polygon points="30,26 51.7,17.6 49.9,39.6 27.9,48.9" fill="#868686"/><g fill="#6a6a6a" font-family="Liberation Sans" font-weight="bold"><text x="24" y="20" font-size="4.5" transform="rotate(-22 24 20)">OBEN</text><text x="29" y="41" font-size="6" transform="rotate(-22 29 41)">VORNE</text><text x="15" y="29" font-size="4.5" transform="rotate(30 15 29)">LINKS</text></g></svg>
<svg class="a" style="left:996px;top:79.5px;" width="28" height="8" viewBox="0 0 28 8"><path d="M1 4.8h5" stroke="#e6e6e6" stroke-width="1.4"/><rect x="12" y="2" width="4" height="4" fill="none" stroke="#e6e6e6" stroke-width="1"/><rect x="13.5" y="0.8" width="3.5" height="3.5" fill="none" stroke="#e6e6e6" stroke-width="0.8"/><path d="M23 1.5l4.5 4.5M27.5 1.5L23 6" stroke="#eee" stroke-width="1.2"/></svg>
<svg class="a" style="left:1006px;top:155px;" width="18" height="131" viewBox="0 0 18 131"><rect x="1" y="1" width="20" height="129" rx="2" fill="#6b6b6b" stroke="#9a9a9a" stroke-width="0.8"/><circle cx="9.5" cy="18.7" r="4.8" fill="#d0d0d0"/><circle cx="9.5" cy="18.7" r="2.6" fill="#6f6f6f"/><circle cx="9.5" cy="18.7" r="1.2" fill="#bbb"/><path d="M6.5 45c0-3 2-4 4-3.5l2 1 0.5 4-3 2.5z" fill="#dedede"/><path d="M6 55c1-1 3-1 4 0l3 3-1.5 2-3-1z" fill="#d8d8d8"/><circle cx="8" cy="55" r="2" fill="#bdbdbd"/><path d="M9.5 69v6M7.5 75h4" stroke="#c8c8c8" stroke-width="1"/><circle cx="9.5" cy="63" r="0.8" fill="#aaa"/><circle cx="9.5" cy="81" r="0.8" fill="#aaa"/><rect x="6" y="92" width="7" height="5" rx="1" fill="none" stroke="#e0e0e0" stroke-width="1"/><circle cx="9.5" cy="104" r="3.5" fill="#7ea7d4"/><circle cx="10.5" cy="102.5" r="1.5" fill="#d6e6f6"/><circle cx="11" cy="123" r="1" fill="#ccc"/><circle cx="11" cy="6" r="1" fill="#ccc"/></svg>
<svg class="a" style="left:200px;top:494px;" width="40" height="26" viewBox="0 0 40 26"><path d="M18.5 20.7V12" stroke="#b02828" stroke-width="1.2"/><path d="M15.8 13.5l2.7-5.5 2.7 5.5z" fill="#c01818"/><path d="M17 3.5l3 3M20 3.5l-3 3" stroke="#e05050" stroke-width="0.8"/><path d="M18.5 20.7L12 16.7" stroke="#3030a0" stroke-width="1.1"/><path d="M9 16.5l3-3 3.2 2.5-2.5 4z" fill="#1818c8"/><path d="M6 11.5h3l-3 3h3" stroke="#3a3ae0" stroke-width="0.8" fill="none"/><path d="M18.5 20.7L26 17.5" stroke="#30a040" stroke-width="1.1"/><path d="M25 17.5l3-3.2 3 3-3 3z" fill="#10b020"/><path d="M34.5 13l1.5-1.5 0.5 4" stroke="#50d060" stroke-width="1.3" fill="none"/></svg>
<div class="a" style="left:1000px;top:502px;width:24px;height:25.7px;background:#fafafa;"></div>
<svg class="a" style="left:1004px;top:506px;" width="17" height="18" viewBox="0 0 17 18"><path d="M8.5 0.5l7.5 4.3v8.6l-7.5 4.3L1 13.4V4.8z" fill="#3d8fdc"/><path d="M8.5 0.5l7.5 4.3v8.6l-7.5 4.3z" fill="#5aa5e8"/><circle cx="5.5" cy="9" r="1.5" fill="#fff"/><circle cx="11" cy="6" r="1.5" fill="#fff"/><circle cx="11" cy="12" r="1.5" fill="#fff"/><path d="M5.5 9L11 6M5.5 9L11 12" stroke="#fff" stroke-width="0.9"/></svg>
<div class="a" style="left:190px;top:543.5px;width:834px;height:13.5px;background:#575757;"></div>
<svg class="a" style="left:191.5px;top:545.5px;" width="10" height="10" viewBox="0 0 10 10"><rect x="0.5" y="0.5" width="5" height="4" fill="none" stroke="#ddd" stroke-width="0.8"/><rect x="2.5" y="2.5" width="5" height="4" fill="#575757" stroke="#ddd" stroke-width="0.8"/><rect x="4.5" y="4.5" width="5" height="4" fill="#575757" stroke="#ddd" stroke-width="0.8"/></svg>
<svg class="a" style="left:204.5px;top:545.5px;" width="10" height="10" viewBox="0 0 10 10"><rect x="0.5" y="0.5" width="4" height="4" fill="none" stroke="#ddd" stroke-width="0.8"/><rect x="5" y="0.5" width="4" height="4" fill="none" stroke="#ddd" stroke-width="0.8"/><rect x="0.5" y="5" width="4" height="4" fill="none" stroke="#ddd" stroke-width="0.8"/><rect x="5" y="5" width="4" height="4" fill="none" stroke="#ddd" stroke-width="0.8"/></svg>
<svg class="a" style="left:217.5px;top:545.5px;" width="11" height="10" viewBox="0 0 11 10"><rect x="0.5" y="0.5" width="9.5" height="4" fill="none" stroke="#ddd" stroke-width="0.8"/><rect x="0.5" y="5" width="9.5" height="4" fill="none" stroke="#ddd" stroke-width="0.8"/></svg>
<svg class="a" style="left:230.5px;top:545.5px;" width="10" height="10" viewBox="0 0 10 10"><rect x="0.5" y="0.5" width="4" height="9" fill="none" stroke="#ddd" stroke-width="0.8"/><rect x="5" y="0.5" width="4" height="9" fill="none" stroke="#ddd" stroke-width="0.8"/></svg>
<svg class="a" style="left:245.5px;top:548px;" width="7" height="5" viewBox="0 0 7 5"><path d="M0 4.5L3.5 0.5 7 4.5z" fill="#eee"/></svg>
<div class="a" style="left:256px;top:545px;width:1px;height:11px;background:#6e6e6e;"></div>
<div class="a" style="left:257px;top:544.5px;width:63px;height:12.5px;background:#5e5e5e;"></div>
<div class="t" style="left:260px;top:547.38px;font-size:7px;color:#cfcfcf;font-weight:400;transform:scaleX(0.9289);">Meine Ausgangs...</div>
<div class="a" style="left:320px;top:544.3px;width:83px;height:13px;background:#f5f5f5;"></div>
<div class="t" style="left:324.3px;top:547.38px;font-size:7px;color:#444;font-weight:400;transform:scaleX(0.9038);">Beschussautoma...iam</div>
<svg class="a" style="left:391.5px;top:547.5px;" width="6" height="6" viewBox="0 0 6 6"><path d="M0.8 0.8l4.4 4.4M5.2 0.8L0.8 5.2" stroke="#333" stroke-width="1.2"/></svg>
<div class="a" style="left:0px;top:557px;width:1024px;height:11px;background:#f0f0f0;"></div>
<div class="a" style="left:190px;top:556.5px;width:130px;height:0.8px;background:#dcdcdc;"></div>
<div class="t" style="left:0.5px;top:561.38px;font-size:7px;color:#222;font-weight:400;transform:scaleX(0.9018);">Drücken Sie F1, um Hilfe zu erhalten.</div>
<div class="a" style="left:983px;top:558px;width:1px;height:10px;background:#d5d5d5;"></div>
<div class="t" style="left:988px;top:561.70px;font-size:6.3px;color:#222;font-weight:400;transform:scaleX(0.9275);">1637</div>
<div class="a" style="left:1004.5px;top:558px;width:1px;height:10px;background:#d5d5d5;"></div>
<div class="t" style="left:1009px;top:561.70px;font-size:6.3px;color:#222;font-weight:400;transform:scaleX(0.9510);">742</div>
</body></html>
